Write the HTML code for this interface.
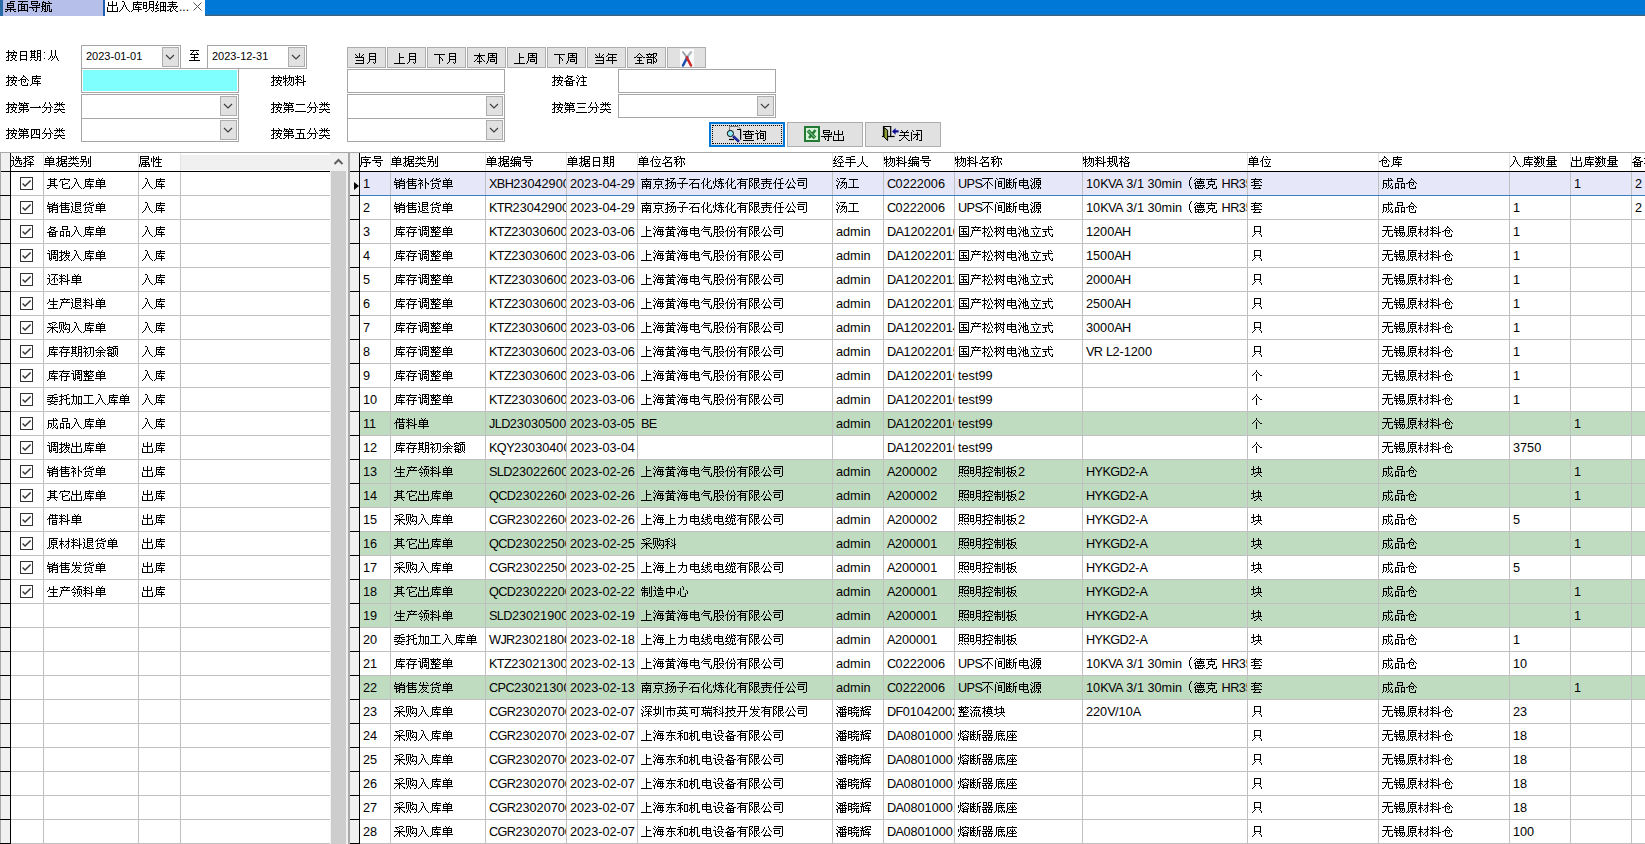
<!DOCTYPE html>
<html><head><meta charset="utf-8"><title>Inventory</title><style>
*{box-sizing:border-box;margin:0;padding:0}
html,body{width:1645px;height:844px;overflow:hidden;background:#fff}
body{position:relative;font-family:"Liberation Sans",sans-serif;font-size:12.7px;color:#000}
div,span{position:absolute;white-space:nowrap}
svg{display:block}
svg.g{display:inline-block;width:12px;height:13px;vertical-align:-2px;shape-rendering:crispEdges}
b{font-weight:normal}
.u{letter-spacing:-0.6px}
.cl{font-weight:normal;display:inline-block;width:6px;text-align:center}
.lb{height:24px;line-height:24px}
.box{background:#fff;border:1px solid #a6a6a6}
.dd{width:17px;height:20px;background:#e1e1e1;border:1px solid #adadad}
.dd svg{position:absolute;left:2px;top:5px}
.qb{top:47px;width:39px;height:21px;background:#e1e1e1;border:1px solid #adadad;text-align:center;line-height:23px;text-indent:-1px}
.ab{top:122px;width:76px;height:25px;background:#e1e1e1;border:1px solid #adadad}
.c{top:0;height:24px;line-height:25px;padding-left:3px;overflow:hidden}
.h{top:0;height:19px;line-height:19px;padding-left:0;overflow:hidden}
</style></head><body>
<svg style="position:absolute;width:0;height:0;left:0;top:0" width="0" height="0"><defs><path id="g0" d="M5 1h5v1h-5zM5 2h1v1h-1zM2 3h7v1h-7zM2 4h1v1h-1zM8 4h1v1h-1zM2 5h7v1h-7zM2 6h1v1h-1zM8 6h1v1h-1zM2 7h7v1h-7zM5 8h1v1h-1zM0 9h11v1h-11zM2 10h1v1h-1zM8 10h1v1h-1zM5 10h1v2h-1zM0 11h2v1h-2zM9 11h2v1h-2z"/><path id="g1" d="M1 1h10v1h-10zM5 2h1v1h-1zM4 3h1v1h-1zM1 4h10v1h-10zM4 5h1v1h-1zM7 5h1v1h-1zM4 6h4v1h-4zM4 7h1v1h-1zM7 7h1v1h-1zM4 8h4v1h-4zM1 5h1v5h-1zM10 5h1v5h-1zM4 9h1v1h-1zM7 9h1v1h-1zM1 10h10v1h-10zM1 11h1v1h-1zM10 11h1v1h-1z"/><path id="g2" d="M2 1h7v1h-7zM2 2h1v1h-1zM8 2h1v1h-1zM2 3h7v1h-7zM10 3h1v2h-1zM2 4h1v1h-1zM3 5h8v1h-8zM7 6h1v1h-1zM0 7h11v1h-11zM3 8h1v1h-1zM7 8h1v3h-1zM4 9h1v2h-1zM6 11h2v1h-2z"/><path id="g3" d="M2 1h1v1h-1zM7 1h1v1h-1zM1 2h4v1h-4zM8 2h1v1h-1zM1 3h1v1h-1zM4 3h7v1h-7zM1 4h2v1h-2zM4 4h1v1h-1zM1 5h1v1h-1zM3 5h2v1h-2zM6 5h3v1h-3zM0 6h5v1h-5zM1 7h1v1h-1zM4 7h1v2h-1zM1 8h2v1h-2zM3 9h2v1h-2zM6 6h1v5h-1zM8 6h1v5h-1zM1 9h1v2h-1zM10 9h1v2h-1zM4 10h1v1h-1zM0 11h1v1h-1zM3 11h3v1h-3zM8 11h3v1h-3z"/><path id="g4" d="M5 1h1v4h-1zM1 2h1v3h-1zM9 2h1v3h-1zM1 5h9v1h-9zM5 6h1v5h-1zM0 7h1v4h-1zM10 7h1v4h-1zM0 11h11v1h-11z"/><path id="g5" d="M3 1h2v1h-2zM5 2h1v3h-1zM4 5h1v2h-1zM6 5h1v2h-1zM3 7h1v2h-1zM7 7h1v2h-1zM2 9h1v1h-1zM8 9h1v1h-1zM1 10h1v1h-1zM9 10h1v1h-1zM0 11h1v1h-1zM10 11h1v1h-1z"/><path id="g6" d="M6 1h1v1h-1zM2 2h9v1h-9zM2 3h1v1h-1zM6 3h1v1h-1zM2 4h9v1h-9zM5 5h1v1h-1zM4 6h1v1h-1zM7 6h1v1h-1zM4 7h6v1h-6zM2 5h1v4h-1zM7 8h1v1h-1zM2 9h9v1h-9zM1 10h1v1h-1zM7 10h1v2h-1zM0 11h1v1h-1z"/><path id="g7" d="M6 1h5v1h-5zM0 2h4v1h-4zM6 2h1v2h-1zM10 2h1v2h-1zM0 3h1v2h-1zM3 3h1v2h-1zM6 4h5v1h-5zM0 5h4v1h-4zM6 5h1v2h-1zM10 5h1v2h-1zM0 6h1v2h-1zM3 6h1v2h-1zM6 7h5v1h-5zM0 8h4v1h-4zM6 8h1v1h-1zM5 9h1v1h-1zM10 8h1v3h-1zM4 10h1v1h-1zM8 10h1v1h-1zM2 11h2v1h-2zM9 11h1v1h-1z"/><path id="g8" d="M2 1h1v2h-1zM5 2h6v1h-6zM1 3h1v2h-1zM3 4h1v1h-1zM5 3h1v3h-1zM8 3h1v3h-1zM10 3h1v3h-1zM0 5h3v1h-3zM2 6h1v1h-1zM5 6h6v1h-6zM1 7h1v1h-1zM0 8h4v1h-4zM5 7h1v3h-1zM8 7h1v3h-1zM10 7h1v3h-1zM2 10h2v1h-2zM5 10h6v1h-6zM0 11h2v1h-2zM5 11h1v1h-1zM10 11h1v1h-1z"/><path id="g9" d="M5 1h1v1h-1zM1 2h9v1h-9zM5 3h1v1h-1zM2 4h7v1h-7zM5 5h1v1h-1zM0 6h11v1h-11zM4 7h1v1h-1zM9 7h1v1h-1zM6 7h1v2h-1zM3 8h1v1h-1zM8 8h1v1h-1zM2 9h2v1h-2zM7 9h1v1h-1zM0 10h2v1h-2zM3 10h1v1h-1zM5 10h1v1h-1zM8 10h1v1h-1zM3 11h2v1h-2zM9 11h2v1h-2z"/><path id="g10" d="M7 1h1v1h-1zM2 1h1v2h-1zM8 2h1v1h-1zM0 3h11v1h-11zM5 4h1v1h-1zM10 4h1v1h-1zM2 4h1v2h-1zM7 4h1v2h-1zM4 5h1v1h-1zM2 6h2v1h-2zM5 6h6v1h-6zM1 7h2v1h-2zM6 7h1v1h-1zM9 7h1v2h-1zM0 8h1v1h-1zM5 8h2v1h-2zM7 9h2v1h-2zM2 8h1v3h-1zM6 10h1v1h-1zM8 10h1v1h-1zM0 11h3v1h-3zM4 11h2v1h-2zM9 11h2v1h-2z"/><path id="g11" d="M2 2h7v1h-7zM2 3h1v3h-1zM8 3h1v3h-1zM2 6h7v1h-7zM2 7h1v3h-1zM8 7h1v3h-1zM2 10h7v1h-7zM2 11h1v1h-1zM8 11h1v1h-1z"/><path id="g12" d="M1 1h1v1h-1zM4 1h1v1h-1zM7 1h4v1h-4zM0 2h6v1h-6zM7 2h1v2h-1zM10 2h1v2h-1zM1 3h1v1h-1zM4 3h1v1h-1zM1 4h4v1h-4zM7 4h4v1h-4zM1 5h1v1h-1zM4 5h1v1h-1zM7 5h1v2h-1zM10 5h1v2h-1zM1 6h4v1h-4zM1 7h1v1h-1zM4 7h1v1h-1zM7 7h4v1h-4zM0 8h6v1h-6zM7 8h1v3h-1zM10 8h1v3h-1zM1 10h1v1h-1zM4 10h1v1h-1zM0 11h1v1h-1zM5 11h2v1h-2zM9 11h2v1h-2z"/><path id="g13" d="M3 1h1v6h-1zM7 1h1v6h-1zM2 7h1v2h-1zM4 7h1v2h-1zM6 7h1v2h-1zM8 7h1v2h-1zM1 9h1v1h-1zM5 9h1v1h-1zM9 9h1v2h-1zM0 10h1v1h-1zM4 10h1v1h-1zM3 11h1v1h-1zM10 11h1v1h-1z"/><path id="g14" d="M5 1h1v1h-1zM5 2h2v1h-2zM4 3h1v1h-1zM7 3h1v1h-1zM3 4h1v1h-1zM8 4h1v1h-1zM2 5h6v1h-6zM9 5h1v1h-1zM0 6h2v1h-2zM10 6h1v1h-1zM7 6h1v2h-1zM5 7h1v1h-1zM6 8h1v1h-1zM3 6h1v5h-1zM9 9h1v2h-1zM4 11h6v1h-6z"/><path id="g15" d="M1 1h1v1h-1zM6 1h1v1h-1zM1 2h4v1h-4zM6 2h5v1h-5zM1 3h1v1h-1zM3 3h1v1h-1zM5 3h1v1h-1zM8 3h1v1h-1zM0 4h1v1h-1zM2 4h8v1h-8zM5 5h1v1h-1zM9 5h1v1h-1zM1 6h9v1h-9zM1 7h1v1h-1zM5 7h1v1h-1zM1 8h10v1h-10zM3 9h1v1h-1zM10 9h1v1h-1zM2 10h1v1h-1zM8 10h2v1h-2zM5 9h1v3h-1zM0 11h2v1h-2z"/><path id="g16" d="M9 5h1v1h-1zM0 6h11v1h-11z"/><path id="g17" d="M3 1h1v2h-1zM7 1h1v2h-1zM2 3h1v2h-1zM8 3h1v2h-1zM1 5h1v1h-1zM9 5h1v1h-1zM0 6h1v1h-1zM2 6h7v1h-7zM10 6h1v1h-1zM4 7h1v2h-1zM3 9h1v1h-1zM8 7h1v4h-1zM2 10h1v1h-1zM0 11h2v1h-2zM6 11h2v1h-2z"/><path id="g18" d="M2 1h1v1h-1zM8 1h1v1h-1zM5 1h1v2h-1zM3 2h1v1h-1zM7 2h1v1h-1zM0 3h11v1h-11zM3 4h1v1h-1zM7 4h1v1h-1zM5 4h1v2h-1zM2 5h1v1h-1zM8 5h1v1h-1zM1 6h1v1h-1zM9 6h1v1h-1zM5 7h1v1h-1zM0 8h11v1h-11zM4 9h1v1h-1zM6 9h1v1h-1zM3 10h1v1h-1zM7 10h1v1h-1zM0 11h3v1h-3zM8 11h3v1h-3z"/><path id="g19" d="M1 2h9v1h-9zM4 3h1v4h-1zM6 3h1v4h-1zM9 3h1v4h-1zM1 3h1v5h-1zM3 7h1v1h-1zM6 7h4v1h-4zM1 8h2v1h-2zM9 8h1v2h-1zM1 9h1v1h-1zM1 10h9v1h-9zM1 11h1v1h-1zM9 11h1v1h-1z"/><path id="g20" d="M6 1h1v2h-1zM2 1h1v3h-1zM0 2h1v2h-1zM5 3h6v1h-6zM0 4h5v1h-5zM0 5h1v1h-1zM2 5h1v1h-1zM6 4h1v3h-1zM2 6h2v1h-2zM8 4h1v4h-1zM1 7h2v1h-2zM5 7h1v1h-1zM0 8h1v1h-1zM4 8h1v1h-1zM7 8h1v1h-1zM6 9h1v1h-1zM10 4h1v7h-1zM5 10h1v1h-1zM7 10h1v1h-1zM2 8h1v4h-1zM4 11h1v1h-1zM8 11h2v1h-2z"/><path id="g21" d="M2 1h1v2h-1zM0 2h1v1h-1zM4 2h2v1h-2zM1 3h3v1h-3zM6 3h1v1h-1zM2 4h1v1h-1zM0 5h6v1h-6zM8 1h1v6h-1zM2 6h1v1h-1zM6 6h1v1h-1zM2 7h2v1h-2zM8 7h3v1h-3zM1 8h2v1h-2zM4 8h5v1h-5zM0 9h1v1h-1zM2 9h1v3h-1zM8 9h1v3h-1z"/><path id="g22" d="M1 3h9v1h-9zM0 10h11v1h-11z"/><path id="g23" d="M1 2h9v1h-9zM5 3h1v3h-1zM2 6h7v1h-7zM4 7h1v4h-1zM8 7h1v4h-1zM0 11h11v1h-11z"/><path id="g24" d="M3 1h1v1h-1zM3 2h6v1h-6zM2 3h2v1h-2zM7 3h1v1h-1zM1 4h1v1h-1zM4 4h3v1h-3zM4 5h1v1h-1zM6 5h2v1h-2zM2 6h2v1h-2zM8 6h3v1h-3zM0 7h9v1h-9zM2 8h1v1h-1zM5 8h1v1h-1zM8 8h1v1h-1zM2 9h7v1h-7zM2 10h1v1h-1zM5 10h1v1h-1zM8 10h1v1h-1zM2 11h7v1h-7z"/><path id="g25" d="M1 1h1v1h-1zM6 1h1v1h-1zM2 2h1v1h-1zM7 2h1v1h-1zM0 3h1v1h-1zM4 3h7v1h-7zM1 4h1v1h-1zM3 4h1v2h-1zM7 4h1v3h-1zM2 6h1v2h-1zM5 7h5v1h-5zM0 8h2v1h-2zM7 8h1v3h-1zM1 9h1v3h-1zM4 11h7v1h-7z"/><path id="g26" d="M1 2h9v1h-9zM2 6h7v1h-7zM0 11h11v1h-11z"/><path id="g27" d="M1 1h9v1h-9zM4 2h1v1h-1zM3 3h1v1h-1zM7 3h1v1h-1zM2 4h1v1h-1zM8 4h1v1h-1zM1 5h9v1h-9zM5 6h1v2h-1zM2 8h7v1h-7zM5 9h1v2h-1zM0 11h11v1h-11z"/><path id="g28" d="M1 2h1v1h-1zM9 2h1v1h-1zM2 3h1v1h-1zM8 3h1v1h-1zM5 1h1v4h-1zM3 4h1v1h-1zM7 4h1v1h-1zM1 5h9v1h-9zM9 6h1v2h-1zM2 8h8v1h-8zM9 9h1v2h-1zM1 11h9v1h-9z"/><path id="g29" d="M3 1h7v1h-7zM3 2h1v2h-1zM9 2h1v2h-1zM3 4h7v1h-7zM3 5h1v2h-1zM9 5h1v2h-1zM3 7h7v1h-7zM3 8h1v2h-1zM9 8h1v3h-1zM2 10h1v1h-1zM7 10h1v1h-1zM1 11h1v1h-1zM8 11h1v1h-1z"/><path id="g30" d="M5 1h1v4h-1zM5 5h5v1h-5zM5 6h1v5h-1zM0 11h11v1h-11z"/><path id="g31" d="M0 2h11v1h-11zM5 3h1v2h-1zM5 5h2v1h-2zM7 6h1v1h-1zM8 7h1v2h-1zM5 6h1v6h-1z"/><path id="g32" d="M5 1h1v2h-1zM0 3h11v1h-11zM4 4h3v1h-3zM3 5h1v2h-1zM7 5h1v2h-1zM2 7h1v1h-1zM8 7h1v1h-1zM5 5h1v4h-1zM1 8h1v1h-1zM9 8h1v1h-1zM0 9h1v1h-1zM3 9h5v1h-5zM10 9h1v1h-1zM5 10h1v2h-1z"/><path id="g33" d="M2 1h9v1h-9zM6 2h1v1h-1zM4 3h5v1h-5zM2 2h1v3h-1zM10 2h1v3h-1zM6 4h1v1h-1zM2 5h9v1h-9zM4 7h5v1h-5zM2 6h1v3h-1zM4 8h1v1h-1zM8 8h1v1h-1zM4 9h5v1h-5zM10 6h1v5h-1zM1 9h1v2h-1zM0 11h1v1h-1zM9 11h2v1h-2z"/><path id="g34" d="M2 1h1v1h-1zM2 2h9v1h-9zM1 3h1v1h-1zM6 3h1v2h-1zM0 4h1v1h-1zM2 5h8v1h-8zM2 6h1v2h-1zM6 6h1v2h-1zM0 8h11v1h-11zM6 9h1v3h-1z"/><path id="g35" d="M5 1h1v1h-1zM4 2h1v1h-1zM6 2h1v1h-1zM3 3h1v1h-1zM7 3h1v1h-1zM2 4h1v1h-1zM8 4h1v1h-1zM0 5h2v1h-2zM3 5h5v1h-5zM9 5h2v1h-2zM5 6h1v2h-1zM3 8h5v1h-5zM5 9h1v2h-1zM1 11h9v1h-9z"/><path id="g36" d="M3 1h1v1h-1zM7 1h4v1h-4zM0 2h8v1h-8zM10 2h1v2h-1zM1 3h1v1h-1zM5 3h1v1h-1zM7 3h1v2h-1zM2 4h1v1h-1zM4 4h1v1h-1zM9 4h1v1h-1zM0 5h9v1h-9zM9 6h1v1h-1zM1 7h5v1h-5zM7 6h1v3h-1zM10 7h1v3h-1zM1 8h1v2h-1zM5 8h1v2h-1zM7 9h2v1h-2zM1 10h5v1h-5zM9 10h1v1h-1zM7 10h1v2h-1zM1 11h1v1h-1zM5 11h1v1h-1z"/><path id="g37" d="M5 1h1v1h-1zM0 2h11v1h-11zM3 3h1v1h-1zM7 3h1v1h-1zM5 3h1v2h-1zM2 4h1v1h-1zM8 4h1v1h-1zM0 5h11v1h-11zM2 6h1v1h-1zM8 6h1v1h-1zM2 7h7v1h-7zM2 8h1v1h-1zM8 8h1v1h-1zM2 9h7v1h-7zM0 11h11v1h-11z"/><path id="g38" d="M1 1h1v1h-1zM5 1h1v1h-1zM2 2h1v1h-1zM5 2h6v1h-6zM4 3h1v1h-1zM0 4h4v1h-4zM5 4h4v1h-4zM5 5h1v1h-1zM8 5h1v1h-1zM5 6h4v1h-4zM2 5h1v4h-1zM5 7h1v2h-1zM8 7h1v2h-1zM2 9h2v1h-2zM5 9h4v1h-4zM10 3h1v8h-1zM2 10h1v1h-1zM8 11h2v1h-2z"/><path id="g39" d="M2 1h1v1h-1zM8 1h1v1h-1zM3 2h1v1h-1zM7 2h1v1h-1zM1 3h9v1h-9zM5 4h1v2h-1zM0 6h10v1h-10zM5 7h1v1h-1zM4 8h1v1h-1zM6 8h1v1h-1zM3 9h1v1h-1zM7 9h1v1h-1zM2 10h1v1h-1zM8 10h1v1h-1zM0 11h2v1h-2zM9 11h2v1h-2z"/><path id="g40" d="M1 1h1v1h-1zM5 1h6v1h-6zM2 2h1v1h-1zM6 3h1v2h-1zM2 5h7v1h-7zM5 6h2v1h-2zM4 7h1v1h-1zM3 8h1v1h-1zM6 7h1v3h-1zM2 9h1v1h-1zM10 2h1v9h-1zM5 10h2v1h-2zM0 3h1v9h-1zM8 11h3v1h-3z"/><path id="g41" d="M1 1h1v1h-1zM5 1h1v2h-1zM7 1h1v2h-1zM2 2h1v2h-1zM5 3h5v1h-5zM4 4h1v1h-1zM7 4h1v1h-1zM0 5h3v1h-3zM4 5h7v1h-7zM6 6h1v2h-1zM8 6h1v3h-1zM10 7h1v2h-1zM5 8h1v1h-1zM2 6h1v4h-1zM4 9h1v1h-1zM9 9h2v1h-2zM1 10h1v1h-1zM3 10h1v1h-1zM0 11h1v1h-1zM4 11h7v1h-7z"/><path id="g42" d="M4 1h7v1h-7zM2 1h1v2h-1zM6 2h1v1h-1zM9 2h1v1h-1zM0 3h5v1h-5zM7 3h2v1h-2zM6 4h1v1h-1zM9 4h1v1h-1zM2 4h1v2h-1zM4 5h2v1h-2zM10 5h1v1h-1zM2 6h2v1h-2zM7 6h1v1h-1zM1 7h2v1h-2zM5 7h5v1h-5zM0 8h1v1h-1zM7 8h1v1h-1zM4 9h7v1h-7zM2 8h1v3h-1zM7 10h1v2h-1zM0 11h3v1h-3z"/><path id="g43" d="M3 1h1v1h-1zM7 1h1v1h-1zM4 2h1v1h-1zM6 2h1v1h-1zM1 3h9v1h-9zM1 4h1v1h-1zM5 4h1v1h-1zM9 4h1v1h-1zM1 5h9v1h-9zM1 6h1v1h-1zM5 6h1v1h-1zM9 6h1v1h-1zM1 7h9v1h-9zM5 8h1v1h-1zM0 9h11v1h-11zM5 10h1v2h-1z"/><path id="g44" d="M5 1h6v1h-6zM2 1h1v2h-1zM5 2h1v1h-1zM10 2h1v2h-1zM0 3h6v1h-6zM5 4h6v1h-6zM2 4h1v2h-1zM4 5h2v1h-2zM8 5h1v1h-1zM2 6h2v1h-2zM5 6h6v1h-6zM1 7h2v1h-2zM5 7h1v1h-1zM8 7h1v1h-1zM0 8h1v1h-1zM5 8h6v1h-6zM4 9h3v1h-3zM2 8h1v3h-1zM10 9h1v2h-1zM0 10h1v1h-1zM4 10h1v1h-1zM6 10h1v1h-1zM1 11h1v1h-1zM3 11h1v1h-1zM6 11h5v1h-5z"/><path id="g45" d="M1 1h5v1h-5zM1 2h1v2h-1zM5 2h1v2h-1zM1 4h5v1h-5zM3 5h1v1h-1zM0 6h7v1h-7zM3 7h1v1h-1zM8 3h1v6h-1zM2 8h1v2h-1zM10 1h1v10h-1zM6 7h1v4h-1zM1 10h1v1h-1zM0 11h1v1h-1zM4 11h2v1h-2zM8 11h3v1h-3z"/><path id="g46" d="M1 1h9v1h-9zM1 2h1v1h-1zM9 2h1v1h-1zM1 3h9v1h-9zM9 4h1v1h-1zM3 5h6v1h-6zM6 6h1v1h-1zM3 7h7v1h-7zM1 4h1v5h-1zM3 8h1v1h-1zM6 8h1v1h-1zM9 8h1v1h-1zM2 9h9v1h-9zM6 10h1v1h-1zM10 10h1v1h-1zM0 9h1v3h-1zM2 10h1v2h-1zM4 11h4v1h-4zM9 11h2v1h-2z"/><path id="g47" d="M2 1h1v2h-1zM7 1h1v3h-1zM5 2h1v2h-1zM2 3h2v1h-2zM4 4h7v1h-7zM2 4h1v2h-1zM4 5h1v1h-1zM0 3h1v4h-1zM7 5h1v2h-1zM2 6h2v1h-2zM5 7h5v1h-5zM7 8h1v3h-1zM2 7h1v5h-1zM4 11h7v1h-7z"/><path id="g48" d="M3 1h1v1h-1zM7 1h1v1h-1zM1 2h9v1h-9zM3 3h1v1h-1zM7 3h1v1h-1zM3 4h5v1h-5zM3 5h1v1h-1zM7 5h1v1h-1zM3 6h5v1h-5zM3 7h1v1h-1zM7 7h1v1h-1zM0 8h11v1h-11zM3 9h1v1h-1zM7 9h1v1h-1zM2 10h1v1h-1zM8 10h1v1h-1zM0 11h2v1h-2zM9 11h1v1h-1z"/><path id="g49" d="M5 1h1v1h-1zM1 2h10v1h-10zM1 3h1v1h-1zM10 3h1v1h-1zM0 4h1v1h-1zM9 4h1v1h-1zM3 4h1v3h-1zM6 6h3v1h-3zM3 7h3v1h-3zM3 8h1v3h-1zM10 9h1v2h-1zM4 11h7v1h-7z"/><path id="g50" d="M1 1h1v2h-1zM7 1h1v2h-1zM5 2h1v1h-1zM10 2h1v1h-1zM1 3h4v1h-4zM6 3h2v1h-2zM9 3h1v1h-1zM0 4h1v1h-1zM5 4h6v1h-6zM0 5h6v1h-6zM10 5h1v1h-1zM2 6h1v1h-1zM5 6h6v1h-6zM0 7h6v1h-6zM10 7h1v1h-1zM5 8h6v1h-6zM2 8h1v2h-1zM4 9h2v1h-2zM10 9h1v2h-1zM2 10h2v1h-2zM5 10h1v2h-1zM2 11h1v1h-1zM8 11h3v1h-3z"/><path id="g51" d="M2 1h1v1h-1zM6 1h1v1h-1zM2 2h9v1h-9zM2 3h1v1h-1zM6 3h1v1h-1zM1 4h9v1h-9zM0 5h1v1h-1zM2 5h1v1h-1zM6 5h1v1h-1zM2 6h8v1h-8zM2 7h1v1h-1zM6 7h1v1h-1zM2 8h9v1h-9zM2 9h1v2h-1zM9 9h1v2h-1zM2 11h8v1h-8z"/><path id="g52" d="M0 1h1v1h-1zM4 1h6v1h-6zM4 2h1v1h-1zM9 2h1v1h-1zM1 2h1v2h-1zM4 3h6v1h-6zM4 4h1v1h-1zM9 4h1v1h-1zM0 5h2v1h-2zM4 5h6v1h-6zM6 7h2v1h-2zM9 7h1v1h-1zM4 6h1v3h-1zM8 8h1v1h-1zM1 6h1v4h-1zM4 9h3v1h-3zM9 9h1v1h-1zM2 10h2v1h-2zM0 10h1v2h-1zM4 11h7v1h-7z"/><path id="g53" d="M3 1h1v1h-1zM6 1h1v1h-1zM9 1h1v1h-1zM2 2h1v1h-1zM6 2h3v1h-3zM1 3h2v1h-2zM4 3h3v1h-3zM10 3h1v1h-1zM0 4h1v1h-1zM2 4h1v1h-1zM7 4h4v1h-4zM2 6h7v1h-7zM2 7h1v3h-1zM8 7h1v3h-1zM5 8h1v2h-1zM4 10h1v1h-1zM6 10h1v1h-1zM1 11h3v1h-3zM7 11h3v1h-3z"/><path id="g54" d="M3 1h6v1h-6zM3 2h1v2h-1zM8 2h1v2h-1zM3 4h6v1h-6zM1 6h4v1h-4zM7 6h4v1h-4zM1 7h1v3h-1zM4 7h1v3h-1zM7 7h1v3h-1zM10 7h1v3h-1zM1 10h4v1h-4zM7 10h4v1h-4zM1 11h1v1h-1zM4 11h1v1h-1zM7 11h1v1h-1zM10 11h1v1h-1z"/><path id="g55" d="M1 1h1v1h-1zM4 1h7v1h-7zM2 2h1v1h-1zM7 2h1v1h-1zM6 3h3v1h-3zM4 2h1v3h-1zM10 2h1v3h-1zM0 4h3v1h-3zM7 4h1v1h-1zM4 5h7v1h-7zM6 7h3v1h-3zM2 5h1v4h-1zM4 6h1v3h-1zM6 8h1v1h-1zM8 8h1v1h-1zM2 9h3v1h-3zM6 9h3v1h-3zM10 6h1v5h-1zM2 10h1v1h-1zM4 10h1v1h-1zM3 11h1v1h-1zM8 11h3v1h-3z"/><path id="g56" d="M2 1h1v2h-1zM5 2h1v1h-1zM9 2h1v1h-1zM7 1h1v3h-1zM0 3h6v1h-6zM10 3h1v1h-1zM5 4h6v1h-6zM2 4h1v2h-1zM4 5h1v1h-1zM7 5h1v1h-1zM2 6h2v1h-2zM6 6h5v1h-5zM1 7h2v1h-2zM6 7h1v1h-1zM9 7h1v2h-1zM0 8h1v1h-1zM5 8h1v1h-1zM7 8h1v1h-1zM2 8h1v2h-1zM4 9h1v1h-1zM8 9h1v1h-1zM2 10h2v1h-2zM7 10h1v1h-1zM9 10h1v1h-1zM0 11h3v1h-3zM5 11h2v1h-2zM10 11h1v1h-1z"/><path id="g57" d="M1 1h1v1h-1zM4 1h7v1h-7zM8 2h1v1h-1zM2 2h1v2h-1zM7 3h1v2h-1zM0 5h3v1h-3zM6 5h2v1h-2zM9 5h1v1h-1zM5 6h1v1h-1zM10 6h1v2h-1zM4 7h1v1h-1zM2 6h1v4h-1zM7 6h1v4h-1zM1 10h1v1h-1zM3 10h1v1h-1zM0 11h1v1h-1zM4 11h7v1h-7z"/><path id="g58" d="M6 1h1v3h-1zM2 2h1v2h-1zM2 4h9v1h-9zM1 5h1v1h-1zM6 5h1v2h-1zM0 6h1v1h-1zM3 7h7v1h-7zM6 8h1v3h-1zM1 11h10v1h-10z"/><path id="g59" d="M5 1h1v1h-1zM1 2h10v1h-10zM3 3h1v1h-1zM8 3h1v1h-1zM4 4h1v1h-1zM7 4h1v1h-1zM2 5h9v1h-9zM2 6h1v3h-1zM1 9h1v2h-1zM0 11h1v1h-1z"/><path id="g60" d="M5 1h4v1h-4zM1 2h4v1h-4zM9 2h1v1h-1zM2 3h1v1h-1zM5 3h1v1h-1zM8 3h1v1h-1zM3 4h1v1h-1zM7 4h1v1h-1zM5 5h1v1h-1zM0 6h11v1h-11zM4 7h3v1h-3zM3 8h1v1h-1zM7 8h1v1h-1zM2 9h1v1h-1zM8 9h1v1h-1zM1 10h1v1h-1zM9 10h2v1h-2zM5 8h1v4h-1zM0 11h1v1h-1zM10 11h1v1h-1z"/><path id="g61" d="M0 1h5v1h-5zM6 1h1v2h-1zM4 2h1v2h-1zM6 3h5v1h-5zM4 4h2v1h-2zM7 5h1v1h-1zM0 2h1v6h-1zM10 4h1v4h-1zM4 5h1v3h-1zM6 6h1v2h-1zM8 7h1v1h-1zM2 3h1v6h-1zM5 8h3v1h-3zM9 8h2v1h-2zM3 9h1v1h-1zM1 9h1v2h-1zM10 9h1v2h-1zM4 10h1v2h-1zM0 11h1v1h-1zM8 11h2v1h-2z"/><path id="g62" d="M4 1h1v1h-1zM0 2h11v1h-11zM3 3h1v1h-1zM4 4h6v1h-6zM2 4h1v2h-1zM8 5h1v1h-1zM1 6h2v1h-2zM7 6h1v1h-1zM0 7h1v1h-1zM2 7h9v1h-9zM7 8h1v3h-1zM2 8h1v4h-1zM5 11h3v1h-3z"/><path id="g63" d="M1 1h1v1h-1zM2 2h1v1h-1zM5 2h6v1h-6zM0 3h5v1h-5zM3 4h1v1h-1zM2 5h1v1h-1zM1 6h2v1h-2zM4 6h1v1h-1zM0 7h1v1h-1zM2 7h2v1h-2zM7 3h1v6h-1zM4 8h1v1h-1zM6 9h1v1h-1zM10 3h1v8h-1zM5 10h1v1h-1zM2 8h1v4h-1zM4 11h1v1h-1zM8 11h2v1h-2z"/><path id="g64" d="M5 1h1v1h-1zM4 2h1v1h-1zM6 2h1v1h-1zM3 3h1v1h-1zM7 3h1v1h-1zM2 4h1v1h-1zM8 4h1v1h-1zM0 5h2v1h-2zM3 5h5v1h-5zM9 5h2v1h-2zM5 6h1v1h-1zM1 7h9v1h-9zM3 9h1v1h-1zM7 9h1v1h-1zM5 8h1v3h-1zM2 10h1v1h-1zM8 10h1v1h-1zM1 11h1v1h-1zM4 11h2v1h-2zM9 11h1v1h-1z"/><path id="g65" d="M2 1h1v1h-1zM6 1h5v1h-5zM0 2h6v1h-6zM8 2h1v1h-1zM0 3h1v1h-1zM5 3h6v1h-6zM1 4h4v1h-4zM0 5h2v1h-2zM4 5h1v1h-1zM2 6h2v1h-2zM6 4h1v4h-1zM1 7h1v1h-1zM4 7h1v1h-1zM0 8h7v1h-7zM10 4h1v6h-1zM8 5h1v5h-1zM1 9h1v1h-1zM4 9h1v1h-1zM6 9h1v1h-1zM1 10h4v1h-4zM7 10h1v1h-1zM9 10h1v1h-1zM1 11h1v1h-1zM4 11h3v1h-3zM10 11h1v1h-1z"/><path id="g66" d="M3 1h1v1h-1zM7 1h1v1h-1zM0 2h11v1h-11zM1 3h1v1h-1zM3 3h1v1h-1zM5 3h1v1h-1zM7 3h1v1h-1zM9 3h1v1h-1zM1 4h5v1h-5zM8 4h1v1h-1zM2 5h3v1h-3zM7 5h1v1h-1zM9 5h1v1h-1zM1 6h1v1h-1zM3 6h1v1h-1zM5 6h2v1h-2zM10 6h1v1h-1zM1 7h9v1h-9zM5 8h1v1h-1zM5 9h4v1h-4zM2 9h1v2h-1zM5 10h1v1h-1zM0 11h11v1h-11z"/><path id="g67" d="M7 1h3v1h-3zM1 2h6v1h-6zM5 3h1v1h-1zM0 4h11v1h-11zM3 5h1v1h-1zM7 5h1v1h-1zM5 5h1v2h-1zM0 6h3v1h-3zM8 6h3v1h-3zM4 7h1v1h-1zM0 8h11v1h-11zM3 9h1v1h-1zM7 9h1v1h-1zM4 10h3v1h-3zM1 11h3v1h-3zM7 11h3v1h-3z"/><path id="g68" d="M8 1h2v1h-2zM2 1h1v2h-1zM5 2h3v1h-3zM0 3h5v1h-5zM7 3h1v2h-1zM2 4h1v2h-1zM4 5h1v1h-1zM7 5h4v1h-4zM2 6h2v1h-2zM5 6h3v1h-3zM1 7h2v1h-2zM0 8h1v1h-1zM7 7h1v4h-1zM2 8h1v3h-1zM10 9h1v2h-1zM0 11h3v1h-3zM8 11h3v1h-3z"/><path id="g69" d="M2 1h1v2h-1zM0 3h6v1h-6zM7 3h4v1h-4zM2 4h1v5h-1zM7 4h1v6h-1zM10 4h1v6h-1zM5 4h1v7h-1zM1 9h1v2h-1zM3 10h1v1h-1zM7 10h4v1h-4zM0 11h1v1h-1zM4 11h1v1h-1zM7 11h1v1h-1zM10 11h1v1h-1z"/><path id="g70" d="M1 2h9v1h-9zM5 3h1v7h-1zM0 10h11v1h-11z"/><path id="g71" d="M8 1h1v1h-1zM6 1h1v2h-1zM9 2h1v1h-1zM1 3h10v1h-10zM1 4h1v2h-1zM1 6h4v1h-4zM9 6h1v2h-1zM6 4h1v5h-1zM8 8h1v1h-1zM4 7h1v3h-1zM7 9h1v1h-1zM1 7h1v4h-1zM10 9h1v2h-1zM3 10h1v1h-1zM6 10h1v1h-1zM8 10h1v1h-1zM0 11h1v1h-1zM5 11h1v1h-1zM9 11h2v1h-2z"/><path id="g72" d="M1 1h1v1h-1zM2 2h1v1h-1zM0 3h5v1h-5zM7 1h1v4h-1zM3 4h1v1h-1zM2 5h1v1h-1zM4 5h1v1h-1zM7 5h2v1h-2zM1 6h3v1h-3zM9 6h2v1h-2zM0 7h1v1h-1zM10 7h1v1h-1zM4 7h1v2h-1zM7 6h1v6h-1zM2 7h1v5h-1z"/><path id="g73" d="M3 1h1v1h-1zM5 1h1v1h-1zM8 1h1v1h-1zM3 2h8v1h-8zM2 3h1v2h-1zM5 3h1v2h-1zM8 3h1v2h-1zM1 5h10v1h-10zM0 6h1v1h-1zM5 7h5v1h-5zM5 8h1v1h-1zM9 8h1v1h-1zM5 9h5v1h-5zM5 10h1v1h-1zM9 10h1v1h-1zM2 6h1v6h-1zM5 11h5v1h-5z"/><path id="g74" d="M2 1h9v1h-9zM6 2h1v1h-1zM4 3h6v1h-6zM4 4h1v1h-1zM9 4h1v1h-1zM4 5h6v1h-6zM4 6h1v1h-1zM9 6h1v1h-1zM4 7h6v1h-6zM2 2h1v8h-1zM4 9h1v1h-1zM8 9h1v1h-1zM6 8h1v3h-1zM1 10h1v1h-1zM3 10h1v1h-1zM9 10h2v1h-2zM0 11h1v1h-1zM2 11h1v1h-1zM5 11h2v1h-2zM10 11h1v1h-1z"/><path id="g75" d="M2 1h1v3h-1zM9 1h1v3h-1zM0 4h5v1h-5zM6 4h5v1h-5zM2 5h1v1h-1zM9 5h1v1h-1zM1 6h3v1h-3zM8 6h2v1h-2zM1 7h2v1h-2zM4 7h1v1h-1zM7 7h1v1h-1zM0 8h1v1h-1zM6 8h1v1h-1zM5 9h1v1h-1zM9 7h1v4h-1zM7 10h1v1h-1zM2 8h1v4h-1zM8 11h1v1h-1z"/><path id="g76" d="M8 1h1v1h-1zM2 1h1v2h-1zM9 2h1v1h-1zM5 1h1v3h-1zM1 3h1v1h-1zM1 4h10v1h-10zM4 5h1v1h-1zM4 6h5v1h-5zM4 7h1v1h-1zM8 7h1v1h-1zM3 8h1v1h-1zM5 8h1v1h-1zM7 8h1v1h-1zM2 9h1v1h-1zM6 9h1v1h-1zM1 10h1v1h-1zM5 10h1v1h-1zM7 10h2v1h-2zM0 11h1v1h-1zM3 11h2v1h-2zM9 11h2v1h-2z"/><path id="g77" d="M6 1h5v1h-5zM3 1h1v2h-1zM8 2h1v1h-1zM2 3h1v1h-1zM4 3h1v1h-1zM7 3h1v1h-1zM1 4h2v1h-2zM5 4h6v1h-6zM0 5h1v1h-1zM3 5h1v1h-1zM1 7h4v1h-4zM6 5h1v4h-1zM10 5h1v4h-1zM4 8h1v1h-1zM8 6h1v4h-1zM3 9h1v1h-1zM2 10h1v1h-1zM7 10h1v1h-1zM9 10h1v1h-1zM3 11h1v1h-1zM6 11h1v1h-1zM10 11h1v1h-1z"/><path id="g78" d="M5 1h1v1h-1zM1 2h10v1h-10zM3 4h6v1h-6zM5 5h1v1h-1zM7 5h1v1h-1zM1 3h1v4h-1zM6 6h1v1h-1zM1 7h10v1h-10zM9 8h1v1h-1zM1 8h1v2h-1zM6 8h1v3h-1zM0 10h1v2h-1zM4 11h3v1h-3z"/><path id="g79" d="M2 1h7v1h-7zM2 2h1v1h-1zM8 2h1v1h-1zM2 3h7v1h-7zM0 5h11v1h-11zM4 6h1v1h-1zM3 7h6v1h-6zM8 8h1v3h-1zM5 10h1v1h-1zM6 11h2v1h-2z"/><path id="g80" d="M7 1h1v1h-1zM2 1h1v2h-1zM4 2h7v1h-7zM4 3h1v1h-1zM10 3h1v1h-1zM1 3h1v2h-1zM3 4h8v1h-8zM0 5h3v1h-3zM4 5h1v1h-1zM2 6h1v1h-1zM4 6h7v1h-7zM1 7h1v1h-1zM4 7h1v1h-1zM6 7h1v1h-1zM8 7h1v1h-1zM10 7h1v1h-1zM0 8h11v1h-11zM4 9h1v1h-1zM6 9h1v2h-1zM8 9h1v2h-1zM10 9h1v2h-1zM2 10h3v1h-3zM0 11h2v1h-2zM4 11h1v1h-1zM9 11h2v1h-2z"/><path id="g81" d="M6 1h1v1h-1zM3 1h1v2h-1zM7 2h1v1h-1zM2 3h1v2h-1zM4 4h7v1h-7zM1 5h2v1h-2zM0 6h1v1h-1zM5 6h1v1h-1zM9 6h1v2h-1zM6 7h1v2h-1zM8 8h1v2h-1zM7 10h1v1h-1zM2 6h1v6h-1zM4 11h7v1h-7z"/><path id="g82" d="M3 1h1v1h-1zM3 2h7v1h-7zM3 3h1v1h-1zM8 3h1v1h-1zM2 4h1v1h-1zM4 4h1v1h-1zM7 4h1v1h-1zM1 5h1v1h-1zM5 5h2v1h-2zM5 6h1v1h-1zM3 7h7v1h-7zM0 8h4v1h-4zM9 8h1v3h-1zM3 9h1v2h-1zM3 11h7v1h-7z"/><path id="g83" d="M3 1h2v1h-2zM6 1h1v2h-1zM0 2h3v1h-3zM2 3h1v1h-1zM5 3h6v1h-6zM0 4h5v1h-5zM10 4h1v1h-1zM2 5h1v1h-1zM1 6h3v1h-3zM5 6h1v2h-1zM9 6h1v2h-1zM1 7h2v1h-2zM0 8h1v1h-1zM2 8h1v1h-1zM4 8h1v1h-1zM10 8h1v2h-1zM2 9h2v1h-2zM7 4h1v7h-1zM2 10h1v2h-1zM6 11h2v1h-2z"/><path id="g84" d="M5 1h5v1h-5zM2 1h1v2h-1zM8 2h1v1h-1zM4 3h1v1h-1zM7 3h1v1h-1zM1 3h1v2h-1zM3 4h1v1h-1zM6 4h1v1h-1zM8 4h1v1h-1zM0 5h3v1h-3zM5 5h1v1h-1zM9 5h1v1h-1zM2 6h1v1h-1zM4 6h1v1h-1zM10 6h1v1h-1zM1 7h1v1h-1zM5 7h5v1h-5zM0 8h4v1h-4zM7 8h1v3h-1zM2 10h2v1h-2zM0 11h2v1h-2zM4 11h7v1h-7z"/><path id="g85" d="M6 1h4v1h-4zM1 2h5v1h-5zM5 3h1v1h-1zM1 4h9v1h-9zM5 5h1v2h-1zM0 7h11v1h-11zM5 8h1v3h-1zM4 11h2v1h-2z"/><path id="g86" d="M5 1h1v6h-1zM4 7h1v2h-1zM6 7h1v2h-1zM3 9h1v1h-1zM7 9h1v1h-1zM2 10h1v1h-1zM8 10h1v1h-1zM0 11h2v1h-2zM9 11h2v1h-2z"/><path id="g87" d="M5 1h5v1h-5zM2 1h1v2h-1zM5 2h1v1h-1zM0 3h6v1h-6zM2 4h1v2h-1zM5 4h1v2h-1zM0 6h6v1h-6zM9 2h1v6h-1zM7 3h1v5h-1zM2 7h1v1h-1zM5 7h1v1h-1zM2 8h2v1h-2zM7 8h2v1h-2zM2 9h1v1h-1zM4 9h1v1h-1zM6 9h1v1h-1zM8 9h1v2h-1zM10 9h1v2h-1zM1 10h1v1h-1zM5 10h1v1h-1zM0 11h1v1h-1zM3 11h2v1h-2zM9 11h2v1h-2z"/><path id="g88" d="M6 1h1v1h-1zM2 1h1v2h-1zM6 2h4v1h-4zM0 3h4v1h-4zM5 3h1v1h-1zM9 3h1v1h-1zM4 4h1v1h-1zM6 4h1v1h-1zM8 4h1v1h-1zM2 4h1v2h-1zM7 5h1v1h-1zM1 6h3v1h-3zM6 6h1v1h-1zM8 6h1v1h-1zM1 7h2v1h-2zM4 7h2v1h-2zM9 7h2v1h-2zM0 8h1v1h-1zM5 8h5v1h-5zM5 9h1v2h-1zM9 9h1v2h-1zM2 8h1v4h-1zM5 11h5v1h-5z"/><path id="g89" d="M0 1h1v1h-1zM3 1h1v1h-1zM5 1h1v1h-1zM7 1h1v2h-1zM1 2h1v1h-1zM3 2h2v1h-2zM0 3h6v1h-6zM7 3h4v1h-4zM2 4h2v1h-2zM6 4h2v1h-2zM1 5h1v1h-1zM3 5h2v1h-2zM0 6h1v1h-1zM3 6h1v1h-1zM5 6h1v1h-1zM0 7h6v1h-6zM9 4h1v5h-1zM7 5h1v4h-1zM2 8h1v1h-1zM4 8h1v2h-1zM1 9h2v1h-2zM8 9h1v1h-1zM3 10h1v1h-1zM7 10h1v1h-1zM9 10h1v1h-1zM0 11h3v1h-3zM4 11h3v1h-3zM10 11h1v1h-1z"/><path id="g90" d="M2 1h7v1h-7zM2 2h1v1h-1zM8 2h1v1h-1zM2 3h7v1h-7zM2 4h1v1h-1zM8 4h1v1h-1zM0 5h11v1h-11zM2 6h1v1h-1zM5 6h1v1h-1zM8 6h1v1h-1zM2 7h7v1h-7zM2 8h1v1h-1zM5 8h1v1h-1zM8 8h1v1h-1zM1 9h9v1h-9zM5 10h1v1h-1zM0 11h11v1h-11z"/><path id="g91" d="M5 1h1v1h-1zM0 2h11v1h-11zM5 3h1v1h-1zM1 4h9v1h-9zM3 5h1v1h-1zM7 5h1v1h-1zM1 5h1v2h-1zM9 5h1v2h-1zM4 6h1v1h-1zM6 6h1v1h-1zM1 7h9v1h-9zM1 8h1v1h-1zM5 8h1v1h-1zM9 8h1v1h-1zM1 9h9v1h-9zM9 10h1v1h-1zM1 10h1v2h-1zM5 10h1v2h-1zM8 11h2v1h-2z"/><path id="g92" d="M5 1h1v1h-1zM0 2h11v1h-11zM2 4h7v1h-7zM2 5h1v2h-1zM8 5h1v2h-1zM2 7h7v1h-7zM2 9h1v1h-1zM8 9h1v1h-1zM5 8h1v3h-1zM1 10h1v1h-1zM9 10h1v1h-1zM0 11h1v1h-1zM4 11h2v1h-2zM10 11h1v1h-1z"/><path id="g93" d="M5 1h5v1h-5zM2 1h1v2h-1zM8 2h1v1h-1zM0 3h5v1h-5zM7 3h1v1h-1zM6 4h1v1h-1zM2 4h1v2h-1zM4 5h7v1h-7zM2 6h2v1h-2zM6 6h1v2h-1zM8 6h1v2h-1zM1 7h2v1h-2zM0 8h1v1h-1zM5 8h1v1h-1zM7 8h1v2h-1zM4 9h1v1h-1zM10 6h1v5h-1zM2 8h1v3h-1zM6 10h1v1h-1zM0 11h3v1h-3zM5 11h1v1h-1zM8 11h2v1h-2z"/><path id="g94" d="M2 1h7v1h-7zM7 2h1v1h-1zM6 3h1v1h-1zM5 4h1v2h-1zM0 6h11v1h-11zM5 7h1v4h-1zM3 10h1v1h-1zM4 11h1v1h-1z"/><path id="g95" d="M0 2h11v1h-11zM5 3h1v1h-1zM4 4h1v1h-1zM3 5h1v1h-1zM2 6h8v1h-8zM1 7h1v1h-1zM0 8h1v1h-1zM3 7h1v3h-1zM9 7h1v3h-1zM3 10h7v1h-7zM3 11h1v1h-1zM9 11h1v1h-1z"/><path id="g96" d="M3 1h1v2h-1zM9 3h1v1h-1zM6 1h1v4h-1zM2 3h1v2h-1zM8 4h1v1h-1zM1 5h2v1h-2zM6 5h2v1h-2zM0 6h1v1h-1zM6 6h1v1h-1zM5 7h2v1h-2zM4 8h1v1h-1zM6 8h1v3h-1zM10 9h1v2h-1zM2 6h1v6h-1zM7 11h4v1h-4z"/><path id="g97" d="M7 1h1v1h-1zM5 2h6v1h-6zM2 1h1v3h-1zM4 3h1v1h-1zM7 3h1v1h-1zM2 4h2v1h-2zM5 4h4v1h-4zM6 5h1v1h-1zM8 5h1v1h-1zM0 4h1v3h-1zM5 6h6v1h-6zM2 5h1v3h-1zM8 7h1v1h-1zM2 8h2v1h-2zM6 8h1v1h-1zM8 8h2v1h-2zM4 9h2v1h-2zM1 9h1v2h-1zM8 9h1v2h-1zM10 9h1v2h-1zM5 10h1v1h-1zM0 11h1v1h-1zM7 11h2v1h-2z"/><path id="g98" d="M4 1h1v1h-1zM0 2h11v1h-11zM3 3h1v1h-1zM3 4h6v1h-6zM2 5h2v1h-2zM8 5h1v1h-1zM1 6h1v1h-1zM3 6h6v1h-6zM0 7h1v1h-1zM3 7h1v1h-1zM8 7h1v1h-1zM3 8h6v1h-6zM8 9h1v2h-1zM3 9h1v3h-1zM7 11h2v1h-2z"/><path id="g99" d="M0 1h4v1h-4zM5 1h5v1h-5zM3 2h1v1h-1zM5 2h1v1h-1zM9 2h1v1h-1zM0 2h1v2h-1zM2 3h1v1h-1zM5 3h5v1h-5zM0 4h2v1h-2zM5 4h1v1h-1zM9 4h1v1h-1zM2 5h1v1h-1zM5 5h5v1h-5zM0 5h1v3h-1zM10 7h1v1h-1zM3 6h1v3h-1zM7 6h1v3h-1zM0 8h2v1h-2zM9 8h1v1h-1zM2 9h1v1h-1zM8 9h1v1h-1zM5 6h1v5h-1zM7 10h1v1h-1zM9 10h1v1h-1zM0 9h1v3h-1zM5 11h2v1h-2zM10 11h1v1h-1z"/><path id="g100" d="M5 1h1v1h-1zM0 2h11v1h-11zM5 3h1v1h-1zM1 4h9v1h-9zM5 5h1v1h-1zM0 6h11v1h-11zM2 7h1v3h-1zM8 7h1v3h-1zM5 8h1v2h-1zM4 10h1v1h-1zM7 10h1v1h-1zM0 11h4v1h-4zM8 11h3v1h-3z"/><path id="g101" d="M8 1h2v1h-2zM3 1h1v2h-1zM5 2h3v1h-3zM2 3h1v2h-1zM7 3h1v3h-1zM1 5h2v1h-2zM0 6h1v1h-1zM4 6h7v1h-7zM7 7h1v4h-1zM2 6h1v6h-1zM5 11h5v1h-5z"/><path id="g102" d="M7 1h1v2h-1zM3 2h1v2h-1zM8 3h1v2h-1zM2 4h1v2h-1zM9 5h1v1h-1zM5 5h1v2h-1zM1 6h1v1h-1zM10 6h1v1h-1zM0 7h1v1h-1zM4 7h1v2h-1zM7 8h1v1h-1zM3 9h1v1h-1zM8 9h1v1h-1zM2 10h8v1h-8zM3 11h1v1h-1zM9 11h1v1h-1z"/><path id="g103" d="M1 1h9v1h-9zM0 3h8v1h-8zM1 5h6v1h-6zM1 6h1v2h-1zM6 6h1v2h-1zM1 8h6v1h-6zM9 2h1v9h-1zM6 11h3v1h-3z"/><path id="g104" d="M1 1h1v1h-1zM4 1h6v1h-6zM2 2h1v1h-1zM8 2h1v1h-1zM0 3h1v1h-1zM7 3h1v1h-1zM1 4h1v1h-1zM6 4h1v1h-1zM3 4h1v2h-1zM5 5h6v1h-6zM6 6h1v1h-1zM2 6h1v2h-1zM8 6h1v2h-1zM5 7h1v1h-1zM0 8h2v1h-2zM4 8h1v1h-1zM7 8h1v1h-1zM6 9h1v1h-1zM10 6h1v5h-1zM5 10h1v1h-1zM8 10h1v1h-1zM1 9h1v3h-1zM4 11h1v1h-1zM9 11h1v1h-1z"/><path id="g105" d="M0 1h11v1h-11zM6 2h1v2h-1zM5 4h1v1h-1zM4 5h2v1h-2zM7 5h1v1h-1zM3 6h1v1h-1zM8 6h1v1h-1zM2 7h1v1h-1zM9 7h1v1h-1zM1 8h1v1h-1zM10 8h1v1h-1zM0 9h1v1h-1zM5 6h1v6h-1z"/><path id="g106" d="M2 1h1v1h-1zM5 1h6v1h-6zM3 2h1v1h-1zM4 4h4v1h-4zM4 5h1v1h-1zM7 5h1v1h-1zM4 6h4v1h-4zM4 7h1v2h-1zM7 7h1v2h-1zM4 9h4v1h-4zM10 2h1v9h-1zM1 3h1v9h-1zM8 11h3v1h-3z"/><path id="g107" d="M9 1h2v1h-2zM3 1h1v2h-1zM0 2h2v1h-2zM5 2h1v1h-1zM7 2h2v1h-2zM2 3h3v1h-3zM0 3h1v2h-1zM7 3h1v2h-1zM3 4h1v1h-1zM0 5h6v1h-6zM7 5h4v1h-4zM0 6h1v1h-1zM2 6h2v1h-2zM3 7h2v1h-2zM0 7h2v2h-2zM5 8h1v1h-1zM7 6h1v4h-1zM3 8h1v2h-1zM0 9h1v1h-1zM0 10h5v1h-5zM6 10h1v1h-1zM9 6h1v6h-1zM5 11h1v1h-1z"/><path id="g108" d="M5 1h1v2h-1zM1 3h9v1h-9zM1 4h1v1h-1zM5 4h1v1h-1zM9 4h1v1h-1zM1 5h9v1h-9zM1 6h1v2h-1zM5 6h1v2h-1zM9 6h1v2h-1zM1 8h9v1h-9zM5 9h1v2h-1zM10 9h1v2h-1zM6 11h5v1h-5z"/><path id="g109" d="M1 1h1v1h-1zM4 1h7v1h-7zM2 2h1v1h-1zM8 2h1v1h-1zM0 3h1v1h-1zM6 3h5v1h-5zM4 2h1v3h-1zM1 4h1v1h-1zM6 4h1v1h-1zM10 4h1v1h-1zM3 5h2v1h-2zM6 5h5v1h-5zM6 6h1v1h-1zM10 6h1v1h-1zM2 6h1v2h-1zM6 7h5v1h-5zM0 8h2v1h-2zM8 8h1v1h-1zM4 6h1v4h-1zM6 9h1v1h-1zM8 9h2v1h-2zM1 9h1v2h-1zM3 10h1v1h-1zM5 10h1v1h-1zM8 10h1v1h-1zM10 10h1v2h-1zM1 11h2v1h-2zM4 11h1v1h-1zM7 11h2v1h-2z"/><path id="g110" d="M9 0h1v1h-1zM8 1h1v2h-1zM7 3h1v6h-1zM8 9h1v2h-1zM9 11h1v1h-1z"/><path id="g111" d="M2 1h1v1h-1zM6 1h1v1h-1zM1 2h1v1h-1zM3 2h8v1h-8zM0 3h1v1h-1zM6 3h1v1h-1zM2 4h8v1h-8zM1 5h1v1h-1zM3 5h1v1h-1zM5 5h1v1h-1zM7 5h1v1h-1zM9 5h1v1h-1zM0 6h2v1h-2zM3 6h7v1h-7zM1 7h1v1h-1zM1 8h10v1h-10zM4 9h1v1h-1zM6 9h1v1h-1zM9 9h1v1h-1zM1 9h1v2h-1zM3 10h2v1h-2zM8 10h1v1h-1zM10 10h1v1h-1zM1 11h2v1h-2zM4 11h5v1h-5z"/><path id="g112" d="M5 1h1v1h-1zM0 2h11v1h-11zM5 3h1v1h-1zM2 4h7v1h-7zM2 5h1v2h-1zM8 5h1v2h-1zM2 7h7v1h-7zM4 8h1v1h-1zM3 9h1v1h-1zM6 8h1v3h-1zM10 9h1v2h-1zM2 10h1v1h-1zM0 11h2v1h-2zM7 11h4v1h-4z"/><path id="g113" d="M3 0h1v1h-1zM4 1h1v2h-1zM5 3h1v6h-1zM4 9h1v2h-1zM3 11h1v1h-1z"/><path id="g114" d="M4 1h1v1h-1zM0 2h11v1h-11zM3 3h1v1h-1zM8 3h1v1h-1zM2 4h6v1h-6zM9 4h1v1h-1zM0 5h2v1h-2zM3 5h1v1h-1zM10 5h1v1h-1zM3 6h5v1h-5zM3 7h1v1h-1zM0 8h11v1h-11zM4 9h1v1h-1zM3 10h1v1h-1zM8 10h1v1h-1zM2 11h8v1h-8z"/><path id="g115" d="M1 1h1v1h-1zM5 1h1v1h-1zM2 2h1v1h-1zM5 2h6v1h-6zM0 3h1v1h-1zM4 3h1v1h-1zM1 4h1v1h-1zM5 4h5v1h-5zM3 4h1v2h-1zM5 5h1v1h-1zM7 5h1v1h-1zM9 5h1v1h-1zM4 6h7v1h-7zM2 6h1v2h-1zM4 7h1v2h-1zM7 7h1v2h-1zM9 7h1v2h-1zM0 8h2v1h-2zM4 9h7v1h-7zM9 10h1v1h-1zM1 9h1v3h-1zM7 11h2v1h-2z"/><path id="g116" d="M3 1h1v1h-1zM7 1h1v1h-1zM1 2h9v1h-9zM3 3h1v1h-1zM7 3h1v1h-1zM0 4h11v1h-11zM5 5h1v1h-1zM2 6h7v1h-7zM2 7h1v1h-1zM5 7h1v1h-1zM8 7h1v1h-1zM2 8h7v1h-7zM2 9h1v1h-1zM5 9h1v1h-1zM8 9h1v1h-1zM2 10h7v1h-7zM1 11h2v1h-2zM8 11h2v1h-2z"/><path id="g117" d="M3 1h1v1h-1zM3 2h7v1h-7zM2 3h1v1h-1zM1 4h1v1h-1zM3 4h6v1h-6zM0 5h1v1h-1zM2 6h6v1h-6zM7 7h1v3h-1zM10 8h1v3h-1zM8 10h1v1h-1zM9 11h2v1h-2z"/><path id="g118" d="M1 1h4v1h-4zM6 1h4v1h-4zM1 2h1v2h-1zM4 2h1v2h-1zM6 2h1v2h-1zM9 2h1v2h-1zM1 4h5v1h-5zM9 4h2v1h-2zM1 5h1v2h-1zM4 5h1v2h-1zM6 6h5v1h-5zM1 7h4v1h-4zM6 7h1v1h-1zM10 7h1v1h-1zM7 8h1v1h-1zM9 8h1v1h-1zM1 8h1v2h-1zM8 9h1v1h-1zM4 8h1v3h-1zM7 10h1v1h-1zM9 10h1v1h-1zM0 10h1v2h-1zM3 11h4v1h-4zM10 11h1v1h-1z"/><path id="g119" d="M3 1h1v2h-1zM8 1h1v2h-1zM6 2h1v2h-1zM2 3h1v2h-1zM9 3h1v2h-1zM5 4h1v1h-1zM1 5h2v1h-2zM4 5h1v1h-1zM10 5h1v1h-1zM0 6h1v1h-1zM5 6h5v1h-5zM6 7h1v3h-1zM9 7h1v4h-1zM5 10h1v1h-1zM2 6h1v6h-1zM4 11h1v1h-1zM8 11h2v1h-2z"/><path id="g120" d="M1 1h10v1h-10zM3 3h6v1h-6zM5 4h1v2h-1zM3 6h6v1h-6zM7 7h1v1h-1zM1 2h1v7h-1zM10 2h1v7h-1zM5 7h1v2h-1zM8 8h1v1h-1zM1 9h10v1h-10zM1 10h1v1h-1zM10 10h1v1h-1zM1 11h10v1h-10z"/><path id="g121" d="M2 1h1v2h-1zM8 1h1v2h-1zM6 2h1v2h-1zM0 3h5v1h-5zM9 3h1v2h-1zM2 4h1v2h-1zM5 4h1v2h-1zM10 5h1v2h-1zM2 6h2v1h-2zM7 6h1v2h-1zM1 7h2v1h-2zM4 7h1v1h-1zM0 8h1v1h-1zM6 8h1v2h-1zM9 9h1v2h-1zM5 10h1v1h-1zM2 8h1v4h-1zM5 11h4v1h-4zM10 11h1v1h-1z"/><path id="g122" d="M2 1h1v2h-1zM9 1h1v2h-1zM4 2h3v1h-3zM0 3h4v1h-4zM6 3h5v1h-5zM2 4h1v2h-1zM4 4h1v2h-1zM6 4h1v2h-1zM9 4h1v3h-1zM1 6h3v1h-3zM7 6h1v1h-1zM5 6h1v2h-1zM0 7h1v1h-1zM8 7h2v1h-2zM2 7h1v2h-1zM4 8h1v1h-1zM6 8h1v1h-1zM2 9h2v1h-2zM7 9h1v1h-1zM9 8h1v3h-1zM2 10h1v2h-1zM8 11h2v1h-2z"/><path id="g123" d="M1 1h1v1h-1zM2 2h1v1h-1zM7 1h1v3h-1zM0 3h1v1h-1zM5 2h1v3h-1zM1 4h1v1h-1zM7 4h3v1h-3zM3 4h1v2h-1zM5 5h3v1h-3zM4 6h2v1h-2zM9 5h1v3h-1zM2 6h1v2h-1zM7 6h1v2h-1zM0 8h2v1h-2zM7 8h3v1h-3zM7 9h1v1h-1zM5 7h1v4h-1zM10 9h1v2h-1zM1 9h1v3h-1zM6 11h5v1h-5z"/><path id="g124" d="M5 1h1v1h-1zM6 2h1v1h-1zM1 3h10v1h-10zM3 5h1v2h-1zM8 5h1v2h-1zM7 7h1v2h-1zM4 7h1v3h-1zM6 9h1v2h-1zM0 11h11v1h-11z"/><path id="g125" d="M8 1h1v1h-1zM9 2h1v1h-1zM6 1h1v3h-1zM0 4h11v1h-11zM1 6h4v1h-4zM6 5h1v3h-1zM3 7h1v3h-1zM7 8h1v2h-1zM10 9h1v2h-1zM3 10h2v1h-2zM8 10h1v1h-1zM0 11h3v1h-3zM9 11h2v1h-2z"/><path id="g126" d="M3 1h7v1h-7zM3 2h1v4h-1zM9 2h1v4h-1zM3 6h7v1h-7zM3 7h1v1h-1zM9 7h1v1h-1zM4 8h1v1h-1zM8 8h1v1h-1zM3 9h1v1h-1zM9 9h1v1h-1zM2 10h1v1h-1zM10 10h1v2h-1zM1 11h1v1h-1z"/><path id="g127" d="M1 1h9v1h-9zM5 2h1v3h-1zM0 5h11v1h-11zM4 6h1v2h-1zM3 8h1v2h-1zM6 6h1v5h-1zM10 9h1v2h-1zM2 10h1v1h-1zM0 11h2v1h-2zM7 11h4v1h-4z"/><path id="g128" d="M5 1h5v1h-5zM1 1h1v2h-1zM5 2h1v1h-1zM9 2h1v1h-1zM1 3h3v1h-3zM5 3h5v1h-5zM0 4h1v1h-1zM5 4h1v1h-1zM9 4h1v1h-1zM0 5h10v1h-10zM2 6h1v1h-1zM5 6h1v1h-1zM0 7h4v1h-4zM5 7h6v1h-6zM4 8h1v1h-1zM2 8h1v2h-1zM6 8h1v2h-1zM8 8h1v2h-1zM10 8h1v3h-1zM2 10h2v1h-2zM5 10h1v1h-1zM7 10h1v1h-1zM2 11h1v1h-1zM6 11h1v1h-1zM8 11h2v1h-2z"/><path id="g129" d="M5 1h1v2h-1zM4 3h1v1h-1zM6 3h1v1h-1zM3 4h1v1h-1zM7 4h1v1h-1zM2 5h1v1h-1zM8 5h1v1h-1zM1 6h1v1h-1zM9 6h2v1h-2zM5 5h1v7h-1z"/><path id="g130" d="M1 1h10v1h-10zM7 2h1v1h-1zM1 2h1v2h-1zM4 2h1v2h-1zM10 2h1v2h-1zM6 3h1v1h-1zM1 4h5v1h-5zM9 4h1v1h-1zM6 5h5v1h-5zM1 5h1v2h-1zM4 5h1v2h-1zM6 6h1v2h-1zM10 6h1v2h-1zM1 7h4v1h-4zM1 8h1v1h-1zM4 8h1v1h-1zM6 8h5v1h-5zM1 10h1v1h-1zM3 10h1v1h-1zM6 10h1v1h-1zM9 10h1v1h-1zM0 11h1v1h-1zM4 11h1v1h-1zM7 11h1v1h-1zM10 11h1v1h-1z"/><path id="g131" d="M7 1h1v1h-1zM2 1h1v2h-1zM4 2h7v1h-7zM0 3h5v1h-5zM10 3h1v1h-1zM6 4h1v1h-1zM8 4h1v1h-1zM2 4h1v2h-1zM5 5h1v1h-1zM9 5h1v1h-1zM2 6h3v1h-3zM10 6h1v1h-1zM1 7h2v1h-2zM5 7h5v1h-5zM0 8h1v1h-1zM2 8h1v3h-1zM7 8h1v3h-1zM0 11h3v1h-3zM4 11h7v1h-7z"/><path id="g132" d="M3 1h1v2h-1zM1 2h1v1h-1zM1 3h6v1h-6zM0 4h1v1h-1zM3 4h1v1h-1zM0 5h7v1h-7zM3 6h1v1h-1zM1 7h6v1h-6zM8 2h1v7h-1zM6 8h1v2h-1zM10 1h1v10h-1zM1 8h1v3h-1zM5 10h2v1h-2zM3 8h1v4h-1zM8 11h3v1h-3z"/><path id="g133" d="M8 1h2v1h-2zM2 1h1v2h-1zM5 2h3v1h-3zM0 3h6v1h-6zM5 4h1v1h-1zM2 4h1v2h-1zM5 5h5v1h-5zM1 6h3v1h-3zM5 6h1v1h-1zM9 6h1v2h-1zM1 7h2v1h-2zM4 7h3v1h-3zM0 8h1v1h-1zM5 8h1v1h-1zM7 8h2v1h-2zM8 9h1v1h-1zM2 8h1v3h-1zM4 9h1v2h-1zM7 10h1v1h-1zM9 10h1v1h-1zM2 11h2v1h-2zM5 11h2v1h-2zM10 11h1v1h-1z"/><path id="g134" d="M7 1h1v2h-1zM2 1h1v3h-1zM5 3h5v1h-5zM0 4h5v1h-5zM7 4h1v3h-1zM9 4h1v3h-1zM2 5h1v3h-1zM4 7h7v1h-7zM2 8h2v1h-2zM7 8h1v1h-1zM0 9h2v1h-2zM6 9h1v1h-1zM8 9h1v1h-1zM5 10h1v1h-1zM9 10h1v1h-1zM3 11h2v1h-2zM10 11h1v1h-1z"/><path id="g135" d="M5 1h1v3h-1zM1 4h9v1h-9zM5 5h1v2h-1zM4 7h1v2h-1zM3 9h1v1h-1zM9 5h1v6h-1zM2 10h1v1h-1zM1 11h1v1h-1zM6 11h3v1h-3z"/><path id="g136" d="M8 1h1v1h-1zM2 1h1v2h-1zM6 1h1v2h-1zM9 2h1v1h-1zM6 3h4v1h-4zM1 3h1v2h-1zM4 4h3v1h-3zM0 5h3v1h-3zM6 5h5v1h-5zM2 6h1v1h-1zM4 6h3v1h-3zM1 7h1v1h-1zM9 7h1v1h-1zM6 7h1v2h-1zM0 8h4v1h-4zM8 8h1v1h-1zM4 9h1v1h-1zM7 9h1v1h-1zM10 9h1v2h-1zM2 10h2v1h-2zM6 10h1v1h-1zM8 10h1v1h-1zM0 11h2v1h-2zM4 11h2v1h-2zM9 11h2v1h-2z"/><path id="g137" d="M8 1h1v1h-1zM2 1h1v2h-1zM6 1h1v2h-1zM8 2h3v1h-3zM4 2h1v2h-1zM6 3h2v1h-2zM9 3h1v1h-1zM1 3h1v2h-1zM3 4h2v1h-2zM6 4h1v1h-1zM10 4h1v1h-1zM0 5h3v1h-3zM5 5h5v1h-5zM2 6h1v1h-1zM1 7h1v1h-1zM5 6h1v3h-1zM9 6h1v3h-1zM0 8h4v1h-4zM7 7h1v3h-1zM4 9h1v1h-1zM2 10h2v1h-2zM6 10h2v1h-2zM10 10h1v1h-1zM0 11h2v1h-2zM4 11h2v1h-2zM7 11h4v1h-4z"/><path id="g138" d="M3 1h2v1h-2zM0 2h3v1h-3zM6 2h1v1h-1zM2 3h1v1h-1zM7 3h1v1h-1zM0 4h5v1h-5zM2 5h1v1h-1zM6 5h1v1h-1zM9 1h1v6h-1zM2 6h2v1h-2zM7 6h1v1h-1zM1 7h2v1h-2zM4 7h1v1h-1zM9 7h2v1h-2zM0 8h1v1h-1zM7 8h3v1h-3zM5 9h2v1h-2zM2 8h1v4h-1zM9 9h1v3h-1z"/><path id="g139" d="M1 1h1v1h-1zM7 1h1v2h-1zM5 2h1v1h-1zM2 2h1v2h-1zM5 3h5v1h-5zM4 4h1v1h-1zM7 4h1v1h-1zM0 5h3v1h-3zM4 5h7v1h-7zM5 7h5v1h-5zM5 8h1v1h-1zM9 8h1v1h-1zM2 6h1v4h-1zM5 9h5v1h-5zM1 10h1v1h-1zM3 10h1v1h-1zM0 11h1v1h-1zM4 11h7v1h-7z"/><path id="g140" d="M5 1h1v2h-1zM1 3h9v1h-9zM1 4h1v3h-1zM5 4h1v3h-1zM9 4h1v3h-1zM1 7h9v1h-9zM1 8h1v1h-1zM9 8h1v1h-1zM5 8h1v4h-1z"/><path id="g141" d="M5 1h1v1h-1zM6 2h1v3h-1zM9 5h1v1h-1zM1 6h1v3h-1zM10 6h1v3h-1zM0 9h1v1h-1zM3 3h1v8h-1zM8 8h1v3h-1zM4 11h5v1h-5z"/><path id="g142" d="M1 1h1v1h-1zM4 1h7v1h-7zM2 2h1v1h-1zM4 2h1v1h-1zM10 2h1v1h-1zM5 3h1v1h-1zM8 3h1v1h-1zM0 4h1v1h-1zM4 4h1v1h-1zM9 4h1v1h-1zM7 4h1v2h-1zM1 5h1v1h-1zM4 6h7v1h-7zM2 6h1v2h-1zM7 7h1v1h-1zM0 8h2v1h-2zM6 8h3v1h-3zM5 9h1v1h-1zM9 9h1v1h-1zM3 10h2v1h-2zM10 10h1v1h-1zM1 9h1v3h-1zM7 9h1v3h-1z"/><path id="g143" d="M2 1h1v3h-1zM5 1h1v3h-1zM0 4h6v1h-6zM2 5h1v3h-1zM5 5h1v3h-1zM2 8h4v1h-4zM7 2h1v8h-1zM0 9h2v1h-2zM4 9h1v1h-1zM3 10h1v1h-1zM10 1h1v11h-1zM2 11h1v1h-1z"/><path id="g144" d="M5 1h1v2h-1zM0 3h11v1h-11zM5 4h1v1h-1zM2 5h8v1h-8zM9 6h1v4h-1zM7 9h1v1h-1zM2 6h1v5h-1zM8 10h1v1h-1zM5 6h1v6h-1z"/><path id="g145" d="M3 1h1v1h-1zM7 1h1v1h-1zM0 2h11v1h-11zM3 3h1v1h-1zM7 3h1v1h-1zM5 4h1v1h-1zM2 5h7v1h-7zM2 6h1v2h-1zM5 6h1v2h-1zM8 6h1v2h-1zM0 8h11v1h-11zM4 9h1v1h-1zM6 9h1v1h-1zM2 10h2v1h-2zM7 10h2v1h-2zM0 11h2v1h-2zM9 11h2v1h-2z"/><path id="g146" d="M0 2h11v1h-11zM2 4h4v1h-4zM2 5h1v2h-1zM5 5h1v2h-1zM2 7h4v1h-4zM2 8h1v1h-1zM5 8h1v1h-1zM8 3h1v8h-1zM6 11h3v1h-3z"/><path id="g147" d="M4 1h1v1h-1zM7 1h1v2h-1zM10 1h1v2h-1zM0 2h5v1h-5zM4 3h7v1h-7zM2 3h1v2h-1zM1 5h10v1h-10zM6 6h1v1h-1zM2 6h1v2h-1zM4 7h7v1h-7zM2 8h3v1h-3zM0 9h2v1h-2zM6 8h1v3h-1zM8 8h1v3h-1zM10 8h1v3h-1zM4 9h1v3h-1zM9 11h2v1h-2z"/><path id="g148" d="M2 1h1v2h-1zM7 1h1v2h-1zM0 3h11v1h-11zM7 4h1v1h-1zM2 4h1v2h-1zM4 5h6v1h-6zM2 6h2v1h-2zM5 6h1v2h-1zM9 6h1v2h-1zM1 7h2v1h-2zM0 8h1v1h-1zM6 8h1v1h-1zM8 8h1v1h-1zM7 9h1v1h-1zM2 8h1v3h-1zM6 10h1v1h-1zM8 10h1v1h-1zM0 11h3v1h-3zM4 11h2v1h-2zM9 11h2v1h-2z"/><path id="g149" d="M1 1h9v1h-9zM3 2h1v4h-1zM7 2h1v4h-1zM0 6h11v1h-11zM3 7h1v1h-1zM2 8h1v2h-1zM1 10h1v1h-1zM7 7h1v5h-1zM0 11h1v1h-1z"/><path id="g150" d="M1 1h1v1h-1zM7 1h3v1h-3zM2 2h5v1h-5zM9 2h1v1h-1zM4 3h1v1h-1zM6 3h1v1h-1zM8 3h1v1h-1zM0 4h1v1h-1zM3 4h8v1h-8zM1 5h1v1h-1zM4 5h1v1h-1zM8 5h1v1h-1zM6 5h1v2h-1zM2 6h2v1h-2zM9 6h1v1h-1zM2 7h9v1h-9zM0 8h2v1h-2zM4 8h1v1h-1zM6 8h1v1h-1zM9 8h1v1h-1zM4 9h6v1h-6zM4 10h1v1h-1zM6 10h1v1h-1zM9 10h1v1h-1zM1 9h1v3h-1zM4 11h6v1h-6z"/><path id="g151" d="M6 1h1v1h-1zM0 2h4v1h-4zM6 2h5v1h-5zM3 3h4v1h-4zM8 3h1v1h-1zM0 3h1v2h-1zM3 4h1v1h-1zM7 4h1v1h-1zM10 4h1v1h-1zM0 5h4v1h-4zM5 5h2v1h-2zM8 5h3v1h-3zM3 6h1v1h-1zM0 6h1v2h-1zM3 7h8v1h-8zM0 8h4v1h-4zM6 8h1v2h-1zM0 9h1v1h-1zM3 9h1v1h-1zM8 8h1v3h-1zM10 9h1v2h-1zM5 10h1v1h-1zM3 11h2v1h-2zM8 11h3v1h-3z"/><path id="g152" d="M5 1h6v1h-6zM2 1h1v2h-1zM0 2h1v1h-1zM4 2h2v1h-2zM10 2h1v1h-1zM1 3h3v1h-3zM7 3h1v1h-1zM2 4h1v1h-1zM5 4h6v1h-6zM0 5h5v1h-5zM6 5h1v1h-1zM5 6h1v1h-1zM8 6h1v1h-1zM5 7h5v1h-5zM3 6h1v3h-1zM8 8h1v1h-1zM3 9h8v1h-8zM1 6h1v5h-1zM3 10h1v1h-1zM8 10h1v2h-1zM0 11h1v1h-1z"/><path id="g153" d="M0 1h1v1h-1zM6 1h1v1h-1zM1 2h1v1h-1zM3 2h8v1h-8zM5 3h1v1h-1zM0 4h1v1h-1zM4 4h1v1h-1zM8 4h1v1h-1zM1 5h1v1h-1zM3 5h7v1h-7zM9 6h1v1h-1zM2 6h1v2h-1zM0 8h2v1h-2zM4 7h1v4h-1zM8 7h1v4h-1zM10 9h1v2h-1zM6 7h1v5h-1zM1 9h1v3h-1zM3 11h1v1h-1zM9 11h2v1h-2z"/><path id="g154" d="M6 1h1v1h-1zM8 1h1v1h-1zM2 1h1v2h-1zM4 2h7v1h-7zM0 3h4v1h-4zM6 3h1v1h-1zM8 3h1v1h-1zM2 4h1v1h-1zM5 4h5v1h-5zM2 5h2v1h-2zM5 5h1v1h-1zM9 5h1v1h-1zM4 6h6v1h-6zM1 6h2v2h-2zM5 7h1v1h-1zM9 7h1v1h-1zM0 8h1v1h-1zM4 8h7v1h-7zM7 9h1v1h-1zM6 10h1v1h-1zM8 10h1v1h-1zM2 8h1v4h-1zM4 11h2v1h-2zM9 11h2v1h-2z"/><path id="g155" d="M5 1h1v2h-1zM1 3h10v1h-10zM4 4h1v1h-1zM6 4h1v2h-1zM3 5h1v1h-1zM2 6h8v1h-8zM3 8h1v1h-1zM8 8h1v1h-1zM2 9h1v1h-1zM9 9h1v1h-1zM6 7h1v4h-1zM1 10h1v1h-1zM10 10h1v1h-1zM4 11h3v1h-3z"/><path id="g156" d="M4 1h2v1h-2zM1 2h3v1h-3zM3 3h1v1h-1zM7 3h4v1h-4zM0 4h6v1h-6zM3 5h1v1h-1zM2 6h3v1h-3zM2 7h2v1h-2zM5 7h1v2h-1zM1 8h1v1h-1zM7 4h1v6h-1zM10 4h1v6h-1zM0 9h1v1h-1zM7 10h4v1h-4zM3 8h1v4h-1z"/><path id="g157" d="M5 2h4v1h-4zM2 1h1v3h-1zM5 3h1v1h-1zM0 4h6v1h-6zM2 5h1v1h-1zM5 5h1v2h-1zM1 6h3v1h-3zM1 7h2v1h-2zM4 7h2v1h-2zM0 8h1v2h-1zM5 8h1v2h-1zM8 3h1v8h-1zM2 8h1v3h-1zM4 10h1v1h-1zM10 10h1v1h-1zM2 11h2v1h-2zM8 11h3v1h-3z"/><path id="g158" d="M1 1h1v1h-1zM5 1h4v1h-4zM2 2h1v1h-1zM5 2h1v2h-1zM8 2h1v2h-1zM4 4h1v1h-1zM8 4h3v1h-3zM0 5h3v1h-3zM4 6h6v1h-6zM5 7h1v1h-1zM9 7h1v1h-1zM2 6h1v3h-1zM6 8h1v1h-1zM8 8h1v1h-1zM2 9h2v1h-2zM7 9h1v1h-1zM2 10h1v1h-1zM6 10h1v1h-1zM8 10h1v1h-1zM3 11h3v1h-3zM9 11h2v1h-2z"/><path id="g159" d="M7 1h1v1h-1zM4 2h7v1h-7zM2 1h1v3h-1zM4 3h1v1h-1zM10 3h1v1h-1zM2 4h2v1h-2zM5 4h1v1h-1zM9 4h1v1h-1zM4 5h1v1h-1zM7 5h1v1h-1zM10 5h1v1h-1zM0 4h1v3h-1zM6 6h1v1h-1zM8 6h1v1h-1zM4 7h2v1h-2zM9 7h2v1h-2zM2 5h1v4h-1zM5 8h5v1h-5zM3 9h1v1h-1zM5 9h1v1h-1zM9 9h1v1h-1zM1 9h1v2h-1zM4 10h6v1h-6zM0 11h1v1h-1zM5 11h1v1h-1zM9 11h1v1h-1z"/><path id="g160" d="M1 1h4v1h-4zM6 1h4v1h-4zM1 2h1v2h-1zM4 2h1v2h-1zM6 2h1v2h-1zM9 2h1v2h-1zM1 4h4v1h-4zM6 4h4v1h-4zM5 5h1v1h-1zM8 5h1v1h-1zM0 6h11v1h-11zM3 7h1v1h-1zM7 7h1v1h-1zM0 8h5v1h-5zM6 8h5v1h-5zM1 9h1v2h-1zM4 9h1v2h-1zM6 9h1v2h-1zM9 9h1v2h-1zM1 11h4v1h-4zM6 11h4v1h-4z"/><path id="g161" d="M6 1h1v1h-1zM2 2h9v1h-9zM4 4h6v1h-6zM4 5h1v1h-1zM7 5h1v1h-1zM4 6h7v1h-7zM7 7h1v1h-1zM2 3h1v7h-1zM4 7h1v3h-1zM8 8h1v2h-1zM6 9h1v1h-1zM10 9h1v1h-1zM1 10h1v1h-1zM4 10h2v1h-2zM9 10h2v1h-2zM7 10h1v2h-1zM0 11h1v1h-1zM4 11h1v1h-1zM10 11h1v1h-1z"/><path id="g162" d="M6 1h1v1h-1zM1 2h10v1h-10zM4 4h1v2h-1zM6 4h1v2h-1zM8 4h1v2h-1zM1 3h1v4h-1zM3 6h1v1h-1zM5 6h3v1h-3zM9 6h1v1h-1zM1 7h2v1h-2zM6 7h1v1h-1zM10 7h1v1h-1zM3 8h7v1h-7zM1 8h1v2h-1zM6 9h1v2h-1zM0 10h1v2h-1zM2 11h9v1h-9z"/></defs></svg>
<div style="left:0;top:0;width:1645px;height:16px;background:#0078d7;border-bottom:1px solid #3a6282"></div>
<div style="left:0;top:14px;width:1645px;height:1px;background:#1f6fb5"></div>
<div style="left:0;top:0;width:3px;height:16px;background:#2a6aa6"></div>
<div style="left:3px;top:0;width:100px;height:16px;background:#b5bfea"></div>
<div style="left:103px;top:0;width:2px;height:16px;background:#1f5fb0"></div>
<div style="left:105px;top:0;width:100px;height:16px;background:#fff"></div>
<div style="left:5px;top:0;height:15px;line-height:15px"><svg class="g"><use href="#g0"/></svg><svg class="g"><use href="#g1"/></svg><svg class="g"><use href="#g2"/></svg><svg class="g"><use href="#g3"/></svg></div>
<div style="left:107px;top:0;height:15px;line-height:15px"><svg class="g"><use href="#g4"/></svg><svg class="g"><use href="#g5"/></svg><svg class="g"><use href="#g6"/></svg><svg class="g"><use href="#g7"/></svg><svg class="g"><use href="#g8"/></svg><svg class="g"><use href="#g9"/></svg><span style="position:static;font-size:12px">...</span></div>
<div style="left:193px;top:2px;width:9px;height:9px"><svg width="9" height="9" viewBox="0 0 9 9"><path d="M0.5 0.5L8.5 8.5M8.5 0.5L0.5 8.5" stroke="#555" stroke-width="1"/></svg></div>
<div class="lb" style="left:6px;top:44px"><svg class="g"><use href="#g10"/></svg><svg class="g"><use href="#g11"/></svg><svg class="g"><use href="#g12"/></svg><svg class="g" style="width:6px"><path d="M2 3h1v1h-1zM2 9h1v1h-1z"/></svg><svg class="g"><use href="#g13"/></svg></div>
<div class="lb" style="left:6px;top:69px"><svg class="g"><use href="#g10"/></svg><svg class="g"><use href="#g14"/></svg><svg class="g"><use href="#g6"/></svg></div>
<div class="lb" style="left:6px;top:96px"><svg class="g"><use href="#g10"/></svg><svg class="g"><use href="#g15"/></svg><svg class="g"><use href="#g16"/></svg><svg class="g"><use href="#g17"/></svg><svg class="g"><use href="#g18"/></svg></div>
<div class="lb" style="left:6px;top:122px"><svg class="g"><use href="#g10"/></svg><svg class="g"><use href="#g15"/></svg><svg class="g"><use href="#g19"/></svg><svg class="g"><use href="#g17"/></svg><svg class="g"><use href="#g18"/></svg></div>
<div class="lb" style="left:271px;top:69px"><svg class="g"><use href="#g10"/></svg><svg class="g"><use href="#g20"/></svg><svg class="g"><use href="#g21"/></svg></div>
<div class="lb" style="left:271px;top:96px"><svg class="g"><use href="#g10"/></svg><svg class="g"><use href="#g15"/></svg><svg class="g"><use href="#g22"/></svg><svg class="g"><use href="#g17"/></svg><svg class="g"><use href="#g18"/></svg></div>
<div class="lb" style="left:271px;top:122px"><svg class="g"><use href="#g10"/></svg><svg class="g"><use href="#g15"/></svg><svg class="g"><use href="#g23"/></svg><svg class="g"><use href="#g17"/></svg><svg class="g"><use href="#g18"/></svg></div>
<div class="lb" style="left:552px;top:69px"><svg class="g"><use href="#g10"/></svg><svg class="g"><use href="#g24"/></svg><svg class="g"><use href="#g25"/></svg></div>
<div class="lb" style="left:552px;top:96px"><svg class="g"><use href="#g10"/></svg><svg class="g"><use href="#g15"/></svg><svg class="g"><use href="#g26"/></svg><svg class="g"><use href="#g17"/></svg><svg class="g"><use href="#g18"/></svg></div>
<div class="lb" style="left:189px;top:44px"><svg class="g"><use href="#g27"/></svg></div>
<div class="box" style="left:81px;top:45px;width:100px;height:24px"></div>
<div style="left:86px;top:44px;height:24px;line-height:24px;font-size:11px">2023-01-01</div>
<div class="dd" style="left:162px;top:47px"><svg width="10" height="8" viewBox="0 0 10 8"><polyline points="1,2 5,6 9,2" fill="none" stroke="#404040" stroke-width="1.2"/></svg></div>
<div class="box" style="left:207px;top:45px;width:100px;height:24px"></div>
<div style="left:212px;top:44px;height:24px;line-height:24px;font-size:11px">2023-12-31</div>
<div class="dd" style="left:288px;top:47px"><svg width="10" height="8" viewBox="0 0 10 8"><polyline points="1,2 5,6 9,2" fill="none" stroke="#404040" stroke-width="1.2"/></svg></div>
<div class="box" style="left:81px;top:68px;width:158px;height:25px;background:#80ffff;box-shadow:inset 0 0 0 1px #fff"></div>
<div class="box" style="left:81px;top:94px;width:158px;height:25px"></div><div class="dd" style="left:220px;top:96px"><svg width="10" height="8" viewBox="0 0 10 8"><polyline points="1,2 5,6 9,2" fill="none" stroke="#404040" stroke-width="1.2"/></svg></div>
<div class="box" style="left:81px;top:118px;width:158px;height:24px"></div><div class="dd" style="left:220px;top:120px"><svg width="10" height="8" viewBox="0 0 10 8"><polyline points="1,2 5,6 9,2" fill="none" stroke="#404040" stroke-width="1.2"/></svg></div>
<div class="box" style="left:347px;top:69px;width:158px;height:24px"></div>
<div class="box" style="left:347px;top:94px;width:158px;height:25px"></div><div class="dd" style="left:486px;top:96px"><svg width="10" height="8" viewBox="0 0 10 8"><polyline points="1,2 5,6 9,2" fill="none" stroke="#404040" stroke-width="1.2"/></svg></div>
<div class="box" style="left:347px;top:118px;width:158px;height:24px"></div><div class="dd" style="left:486px;top:120px"><svg width="10" height="8" viewBox="0 0 10 8"><polyline points="1,2 5,6 9,2" fill="none" stroke="#404040" stroke-width="1.2"/></svg></div>
<div class="box" style="left:618px;top:69px;width:158px;height:24px"></div>
<div class="box" style="left:618px;top:94px;width:158px;height:24px"></div><div class="dd" style="left:757px;top:96px"><svg width="10" height="8" viewBox="0 0 10 8"><polyline points="1,2 5,6 9,2" fill="none" stroke="#404040" stroke-width="1.2"/></svg></div>
<div class="qb" style="left:347px"><svg class="g"><use href="#g28"/></svg><svg class="g"><use href="#g29"/></svg></div>
<div class="qb" style="left:387px"><svg class="g"><use href="#g30"/></svg><svg class="g"><use href="#g29"/></svg></div>
<div class="qb" style="left:427px"><svg class="g"><use href="#g31"/></svg><svg class="g"><use href="#g29"/></svg></div>
<div class="qb" style="left:467px"><svg class="g"><use href="#g32"/></svg><svg class="g"><use href="#g33"/></svg></div>
<div class="qb" style="left:507px"><svg class="g"><use href="#g30"/></svg><svg class="g"><use href="#g33"/></svg></div>
<div class="qb" style="left:547px"><svg class="g"><use href="#g31"/></svg><svg class="g"><use href="#g33"/></svg></div>
<div class="qb" style="left:587px"><svg class="g"><use href="#g28"/></svg><svg class="g"><use href="#g34"/></svg></div>
<div class="qb" style="left:627px"><svg class="g"><use href="#g35"/></svg><svg class="g"><use href="#g36"/></svg></div>
<div class="qb" style="left:667px"><svg style="position:absolute;left:12px;top:1px" width="14" height="18" viewBox="0 0 14 18"><rect x="0" y="0" width="14" height="18" fill="#fafafa"/><path d="M2.5 2.5L7.5 9" stroke="#8a9aa0" stroke-width="1.6"/><path d="M11.5 2.5L6.5 9" stroke="#b0b8bc" stroke-width="2.2"/><path d="M7.2 8.5L3 16.5" stroke="#1f4fb0" stroke-width="2.6" stroke-linecap="round"/><path d="M6.8 8.5L11 16.5" stroke="#d02828" stroke-width="2.6" stroke-linecap="round"/></svg></div>
<div class="ab" style="left:709px;border:2px solid #0078d7"><div style="left:1px;top:1px;width:70px;height:19px;border:1px dotted #000"></div></div>
<div class="ab" style="left:787px"></div>
<div class="ab" style="left:865px"></div>
<div style="left:724px;top:124px;width:20px;height:20px"><svg width="20" height="20" viewBox="0 0 20 20"><path d="M5.5 6.5V2.5H14L16.5 5" fill="none" stroke="#7a7a7a" stroke-width="1"/><path d="M13 5.5H16.6V15.8" fill="none" stroke="#000" stroke-width="1.2"/><path d="M5 15.5H10" stroke="#000" stroke-width="1.2"/><path d="M9.2 12.2L15 17.6" stroke="#000a80" stroke-width="2.6"/><path d="M9.6 12.4L14.6 17" stroke="#7090f0" stroke-width="0.6"/><circle cx="6.4" cy="9.5" r="3.1" fill="#8ee8f6" stroke="#000" stroke-width="1"/></svg></div>
<div style="left:743px;top:124px;height:25px;line-height:25px"><svg class="g"><use href="#g37"/></svg><svg class="g"><use href="#g38"/></svg></div>
<div style="left:804px;top:126px;width:16px;height:16px"><svg width="16" height="16" viewBox="0 0 16 16"><rect x="1" y="1" width="14" height="14" fill="#d8f4d8" stroke="#237a34" stroke-width="2"/><path d="M4 4.5L11 12" stroke="#237a34" stroke-width="3.6"/><path d="M11.5 4L5 12" stroke="#237a34" stroke-width="2.6"/><path d="M4.5 5L11 11.5" stroke="#c8f0c8" stroke-width="0.8"/></svg></div>
<div style="left:821px;top:124px;height:25px;line-height:25px"><svg class="g"><use href="#g2"/></svg><svg class="g"><use href="#g4"/></svg></div>
<div style="left:879px;top:124px;width:20px;height:20px"><svg width="20" height="20" viewBox="0 0 20 20"><path d="M3 12.5H15.6" stroke="#000" stroke-width="1.2"/><path d="M4.5 12.5V2.5H11.7V12.5" fill="none" stroke="#000" stroke-width="1.2"/><path d="M5 3.6L8.6 6.2V16.6L5 13Z" fill="#8fa032" stroke="#000" stroke-width="1"/><path d="M13 7.4L16.6 4V6.2H19.6V8.6H16.6V10.8Z" fill="#0a0a90"/></svg></div>
<div style="left:899px;top:124px;height:25px;line-height:25px"><svg class="g"><use href="#g39"/></svg><svg class="g"><use href="#g40"/></svg></div>
<div style="left:0px;top:152px;width:348px;height:1px;background:#a8a8a8"></div>
<div style="left:181px;top:155px;width:149px;height:15px;background:#f0f0f0"></div>
<div style="left:0;top:153px;width:10px;height:691px;background:#f0f0f0"></div>
<div style="left:0px;top:171px;width:330px;height:1px;background:#000"></div>
<div style="left:10px;top:153px;width:1px;height:691px;background:#000"></div>
<div style="left:0px;top:152px;width:1px;height:692px;background:#a8a8a8"></div>
<div style="left:43px;top:153px;width:1px;height:18px;background:#e4e4e4"></div>
<div style="left:43px;top:172px;width:1px;height:672px;background:#c0c0c0"></div>
<div style="left:138px;top:153px;width:1px;height:18px;background:#e4e4e4"></div>
<div style="left:138px;top:172px;width:1px;height:672px;background:#c0c0c0"></div>
<div style="left:180px;top:153px;width:1px;height:18px;background:#e4e4e4"></div>
<div style="left:180px;top:172px;width:1px;height:672px;background:#c0c0c0"></div>
<div style="left:11px;top:195px;width:319px;height:1px;background:#c0c0c0"></div>
<div style="left:0px;top:195px;width:10px;height:1px;background:#000"></div>
<div style="left:11px;top:219px;width:319px;height:1px;background:#c0c0c0"></div>
<div style="left:0px;top:219px;width:10px;height:1px;background:#000"></div>
<div style="left:11px;top:243px;width:319px;height:1px;background:#c0c0c0"></div>
<div style="left:0px;top:243px;width:10px;height:1px;background:#000"></div>
<div style="left:11px;top:267px;width:319px;height:1px;background:#c0c0c0"></div>
<div style="left:0px;top:267px;width:10px;height:1px;background:#000"></div>
<div style="left:11px;top:291px;width:319px;height:1px;background:#c0c0c0"></div>
<div style="left:0px;top:291px;width:10px;height:1px;background:#000"></div>
<div style="left:11px;top:315px;width:319px;height:1px;background:#c0c0c0"></div>
<div style="left:0px;top:315px;width:10px;height:1px;background:#000"></div>
<div style="left:11px;top:339px;width:319px;height:1px;background:#c0c0c0"></div>
<div style="left:0px;top:339px;width:10px;height:1px;background:#000"></div>
<div style="left:11px;top:363px;width:319px;height:1px;background:#c0c0c0"></div>
<div style="left:0px;top:363px;width:10px;height:1px;background:#000"></div>
<div style="left:11px;top:387px;width:319px;height:1px;background:#c0c0c0"></div>
<div style="left:0px;top:387px;width:10px;height:1px;background:#000"></div>
<div style="left:11px;top:411px;width:319px;height:1px;background:#c0c0c0"></div>
<div style="left:0px;top:411px;width:10px;height:1px;background:#000"></div>
<div style="left:11px;top:435px;width:319px;height:1px;background:#c0c0c0"></div>
<div style="left:0px;top:435px;width:10px;height:1px;background:#000"></div>
<div style="left:11px;top:459px;width:319px;height:1px;background:#c0c0c0"></div>
<div style="left:0px;top:459px;width:10px;height:1px;background:#000"></div>
<div style="left:11px;top:483px;width:319px;height:1px;background:#c0c0c0"></div>
<div style="left:0px;top:483px;width:10px;height:1px;background:#000"></div>
<div style="left:11px;top:507px;width:319px;height:1px;background:#c0c0c0"></div>
<div style="left:0px;top:507px;width:10px;height:1px;background:#000"></div>
<div style="left:11px;top:531px;width:319px;height:1px;background:#c0c0c0"></div>
<div style="left:0px;top:531px;width:10px;height:1px;background:#000"></div>
<div style="left:11px;top:555px;width:319px;height:1px;background:#c0c0c0"></div>
<div style="left:0px;top:555px;width:10px;height:1px;background:#000"></div>
<div style="left:11px;top:579px;width:319px;height:1px;background:#c0c0c0"></div>
<div style="left:0px;top:579px;width:10px;height:1px;background:#000"></div>
<div style="left:11px;top:603px;width:319px;height:1px;background:#c0c0c0"></div>
<div style="left:0px;top:603px;width:10px;height:1px;background:#000"></div>
<div style="left:11px;top:627px;width:319px;height:1px;background:#c0c0c0"></div>
<div style="left:0px;top:627px;width:10px;height:1px;background:#000"></div>
<div style="left:11px;top:651px;width:319px;height:1px;background:#c0c0c0"></div>
<div style="left:0px;top:651px;width:10px;height:1px;background:#000"></div>
<div style="left:11px;top:675px;width:319px;height:1px;background:#c0c0c0"></div>
<div style="left:0px;top:675px;width:10px;height:1px;background:#000"></div>
<div style="left:11px;top:699px;width:319px;height:1px;background:#c0c0c0"></div>
<div style="left:0px;top:699px;width:10px;height:1px;background:#000"></div>
<div style="left:11px;top:723px;width:319px;height:1px;background:#c0c0c0"></div>
<div style="left:0px;top:723px;width:10px;height:1px;background:#000"></div>
<div style="left:11px;top:747px;width:319px;height:1px;background:#c0c0c0"></div>
<div style="left:0px;top:747px;width:10px;height:1px;background:#000"></div>
<div style="left:11px;top:771px;width:319px;height:1px;background:#c0c0c0"></div>
<div style="left:0px;top:771px;width:10px;height:1px;background:#000"></div>
<div style="left:11px;top:795px;width:319px;height:1px;background:#c0c0c0"></div>
<div style="left:0px;top:795px;width:10px;height:1px;background:#000"></div>
<div style="left:11px;top:819px;width:319px;height:1px;background:#c0c0c0"></div>
<div style="left:0px;top:819px;width:10px;height:1px;background:#000"></div>
<div style="left:11px;top:843px;width:319px;height:1px;background:#c0c0c0"></div>
<div style="left:0px;top:843px;width:10px;height:1px;background:#000"></div>
<div class="h" style="left:11px;top:153px;width:32px;height:18px"><svg class="g"><use href="#g41"/></svg><svg class="g"><use href="#g42"/></svg></div>
<div class="h" style="left:44px;top:153px;width:94px;height:18px"><svg class="g"><use href="#g43"/></svg><svg class="g"><use href="#g44"/></svg><svg class="g"><use href="#g18"/></svg><svg class="g"><use href="#g45"/></svg></div>
<div class="h" style="left:139px;top:153px;width:41px;height:18px"><svg class="g"><use href="#g46"/></svg><svg class="g"><use href="#g47"/></svg></div>
<div style="left:20px;top:177px;width:13px;height:13px"><svg width="13" height="13" viewBox="0 0 13 13"><rect x="0.5" y="0.5" width="12" height="12" fill="#fff" stroke="#333" stroke-width="1"/><polyline points="2.6,6.6 5,9 10.6,3.4" fill="none" stroke="#333" stroke-width="1.4"/></svg></div>
<div class="c" style="left:44px;top:172px;width:94px"><svg class="g"><use href="#g48"/></svg><svg class="g"><use href="#g49"/></svg><svg class="g"><use href="#g5"/></svg><svg class="g"><use href="#g6"/></svg><svg class="g"><use href="#g43"/></svg></div>
<div class="c" style="left:139px;top:172px;width:41px"><svg class="g"><use href="#g5"/></svg><svg class="g"><use href="#g6"/></svg></div>
<div style="left:20px;top:201px;width:13px;height:13px"><svg width="13" height="13" viewBox="0 0 13 13"><rect x="0.5" y="0.5" width="12" height="12" fill="#fff" stroke="#333" stroke-width="1"/><polyline points="2.6,6.6 5,9 10.6,3.4" fill="none" stroke="#333" stroke-width="1.4"/></svg></div>
<div class="c" style="left:44px;top:196px;width:94px"><svg class="g"><use href="#g50"/></svg><svg class="g"><use href="#g51"/></svg><svg class="g"><use href="#g52"/></svg><svg class="g"><use href="#g53"/></svg><svg class="g"><use href="#g43"/></svg></div>
<div class="c" style="left:139px;top:196px;width:41px"><svg class="g"><use href="#g5"/></svg><svg class="g"><use href="#g6"/></svg></div>
<div style="left:20px;top:225px;width:13px;height:13px"><svg width="13" height="13" viewBox="0 0 13 13"><rect x="0.5" y="0.5" width="12" height="12" fill="#fff" stroke="#333" stroke-width="1"/><polyline points="2.6,6.6 5,9 10.6,3.4" fill="none" stroke="#333" stroke-width="1.4"/></svg></div>
<div class="c" style="left:44px;top:220px;width:94px"><svg class="g"><use href="#g24"/></svg><svg class="g"><use href="#g54"/></svg><svg class="g"><use href="#g5"/></svg><svg class="g"><use href="#g6"/></svg><svg class="g"><use href="#g43"/></svg></div>
<div class="c" style="left:139px;top:220px;width:41px"><svg class="g"><use href="#g5"/></svg><svg class="g"><use href="#g6"/></svg></div>
<div style="left:20px;top:249px;width:13px;height:13px"><svg width="13" height="13" viewBox="0 0 13 13"><rect x="0.5" y="0.5" width="12" height="12" fill="#fff" stroke="#333" stroke-width="1"/><polyline points="2.6,6.6 5,9 10.6,3.4" fill="none" stroke="#333" stroke-width="1.4"/></svg></div>
<div class="c" style="left:44px;top:244px;width:94px"><svg class="g"><use href="#g55"/></svg><svg class="g"><use href="#g56"/></svg><svg class="g"><use href="#g5"/></svg><svg class="g"><use href="#g6"/></svg><svg class="g"><use href="#g43"/></svg></div>
<div class="c" style="left:139px;top:244px;width:41px"><svg class="g"><use href="#g5"/></svg><svg class="g"><use href="#g6"/></svg></div>
<div style="left:20px;top:273px;width:13px;height:13px"><svg width="13" height="13" viewBox="0 0 13 13"><rect x="0.5" y="0.5" width="12" height="12" fill="#fff" stroke="#333" stroke-width="1"/><polyline points="2.6,6.6 5,9 10.6,3.4" fill="none" stroke="#333" stroke-width="1.4"/></svg></div>
<div class="c" style="left:44px;top:268px;width:94px"><svg class="g"><use href="#g57"/></svg><svg class="g"><use href="#g21"/></svg><svg class="g"><use href="#g43"/></svg></div>
<div class="c" style="left:139px;top:268px;width:41px"><svg class="g"><use href="#g5"/></svg><svg class="g"><use href="#g6"/></svg></div>
<div style="left:20px;top:297px;width:13px;height:13px"><svg width="13" height="13" viewBox="0 0 13 13"><rect x="0.5" y="0.5" width="12" height="12" fill="#fff" stroke="#333" stroke-width="1"/><polyline points="2.6,6.6 5,9 10.6,3.4" fill="none" stroke="#333" stroke-width="1.4"/></svg></div>
<div class="c" style="left:44px;top:292px;width:94px"><svg class="g"><use href="#g58"/></svg><svg class="g"><use href="#g59"/></svg><svg class="g"><use href="#g52"/></svg><svg class="g"><use href="#g21"/></svg><svg class="g"><use href="#g43"/></svg></div>
<div class="c" style="left:139px;top:292px;width:41px"><svg class="g"><use href="#g5"/></svg><svg class="g"><use href="#g6"/></svg></div>
<div style="left:20px;top:321px;width:13px;height:13px"><svg width="13" height="13" viewBox="0 0 13 13"><rect x="0.5" y="0.5" width="12" height="12" fill="#fff" stroke="#333" stroke-width="1"/><polyline points="2.6,6.6 5,9 10.6,3.4" fill="none" stroke="#333" stroke-width="1.4"/></svg></div>
<div class="c" style="left:44px;top:316px;width:94px"><svg class="g"><use href="#g60"/></svg><svg class="g"><use href="#g61"/></svg><svg class="g"><use href="#g5"/></svg><svg class="g"><use href="#g6"/></svg><svg class="g"><use href="#g43"/></svg></div>
<div class="c" style="left:139px;top:316px;width:41px"><svg class="g"><use href="#g5"/></svg><svg class="g"><use href="#g6"/></svg></div>
<div style="left:20px;top:345px;width:13px;height:13px"><svg width="13" height="13" viewBox="0 0 13 13"><rect x="0.5" y="0.5" width="12" height="12" fill="#fff" stroke="#333" stroke-width="1"/><polyline points="2.6,6.6 5,9 10.6,3.4" fill="none" stroke="#333" stroke-width="1.4"/></svg></div>
<div class="c" style="left:44px;top:340px;width:94px"><svg class="g"><use href="#g6"/></svg><svg class="g"><use href="#g62"/></svg><svg class="g"><use href="#g12"/></svg><svg class="g"><use href="#g63"/></svg><svg class="g"><use href="#g64"/></svg><svg class="g"><use href="#g65"/></svg></div>
<div class="c" style="left:139px;top:340px;width:41px"><svg class="g"><use href="#g5"/></svg><svg class="g"><use href="#g6"/></svg></div>
<div style="left:20px;top:369px;width:13px;height:13px"><svg width="13" height="13" viewBox="0 0 13 13"><rect x="0.5" y="0.5" width="12" height="12" fill="#fff" stroke="#333" stroke-width="1"/><polyline points="2.6,6.6 5,9 10.6,3.4" fill="none" stroke="#333" stroke-width="1.4"/></svg></div>
<div class="c" style="left:44px;top:364px;width:94px"><svg class="g"><use href="#g6"/></svg><svg class="g"><use href="#g62"/></svg><svg class="g"><use href="#g55"/></svg><svg class="g"><use href="#g66"/></svg><svg class="g"><use href="#g43"/></svg></div>
<div class="c" style="left:139px;top:364px;width:41px"><svg class="g"><use href="#g5"/></svg><svg class="g"><use href="#g6"/></svg></div>
<div style="left:20px;top:393px;width:13px;height:13px"><svg width="13" height="13" viewBox="0 0 13 13"><rect x="0.5" y="0.5" width="12" height="12" fill="#fff" stroke="#333" stroke-width="1"/><polyline points="2.6,6.6 5,9 10.6,3.4" fill="none" stroke="#333" stroke-width="1.4"/></svg></div>
<div class="c" style="left:44px;top:388px;width:94px"><svg class="g"><use href="#g67"/></svg><svg class="g"><use href="#g68"/></svg><svg class="g"><use href="#g69"/></svg><svg class="g"><use href="#g70"/></svg><svg class="g"><use href="#g5"/></svg><svg class="g"><use href="#g6"/></svg><svg class="g"><use href="#g43"/></svg></div>
<div class="c" style="left:139px;top:388px;width:41px"><svg class="g"><use href="#g5"/></svg><svg class="g"><use href="#g6"/></svg></div>
<div style="left:20px;top:417px;width:13px;height:13px"><svg width="13" height="13" viewBox="0 0 13 13"><rect x="0.5" y="0.5" width="12" height="12" fill="#fff" stroke="#333" stroke-width="1"/><polyline points="2.6,6.6 5,9 10.6,3.4" fill="none" stroke="#333" stroke-width="1.4"/></svg></div>
<div class="c" style="left:44px;top:412px;width:94px"><svg class="g"><use href="#g71"/></svg><svg class="g"><use href="#g54"/></svg><svg class="g"><use href="#g5"/></svg><svg class="g"><use href="#g6"/></svg><svg class="g"><use href="#g43"/></svg></div>
<div class="c" style="left:139px;top:412px;width:41px"><svg class="g"><use href="#g5"/></svg><svg class="g"><use href="#g6"/></svg></div>
<div style="left:20px;top:441px;width:13px;height:13px"><svg width="13" height="13" viewBox="0 0 13 13"><rect x="0.5" y="0.5" width="12" height="12" fill="#fff" stroke="#333" stroke-width="1"/><polyline points="2.6,6.6 5,9 10.6,3.4" fill="none" stroke="#333" stroke-width="1.4"/></svg></div>
<div class="c" style="left:44px;top:436px;width:94px"><svg class="g"><use href="#g55"/></svg><svg class="g"><use href="#g56"/></svg><svg class="g"><use href="#g4"/></svg><svg class="g"><use href="#g6"/></svg><svg class="g"><use href="#g43"/></svg></div>
<div class="c" style="left:139px;top:436px;width:41px"><svg class="g"><use href="#g4"/></svg><svg class="g"><use href="#g6"/></svg></div>
<div style="left:20px;top:465px;width:13px;height:13px"><svg width="13" height="13" viewBox="0 0 13 13"><rect x="0.5" y="0.5" width="12" height="12" fill="#fff" stroke="#333" stroke-width="1"/><polyline points="2.6,6.6 5,9 10.6,3.4" fill="none" stroke="#333" stroke-width="1.4"/></svg></div>
<div class="c" style="left:44px;top:460px;width:94px"><svg class="g"><use href="#g50"/></svg><svg class="g"><use href="#g51"/></svg><svg class="g"><use href="#g72"/></svg><svg class="g"><use href="#g53"/></svg><svg class="g"><use href="#g43"/></svg></div>
<div class="c" style="left:139px;top:460px;width:41px"><svg class="g"><use href="#g4"/></svg><svg class="g"><use href="#g6"/></svg></div>
<div style="left:20px;top:489px;width:13px;height:13px"><svg width="13" height="13" viewBox="0 0 13 13"><rect x="0.5" y="0.5" width="12" height="12" fill="#fff" stroke="#333" stroke-width="1"/><polyline points="2.6,6.6 5,9 10.6,3.4" fill="none" stroke="#333" stroke-width="1.4"/></svg></div>
<div class="c" style="left:44px;top:484px;width:94px"><svg class="g"><use href="#g48"/></svg><svg class="g"><use href="#g49"/></svg><svg class="g"><use href="#g4"/></svg><svg class="g"><use href="#g6"/></svg><svg class="g"><use href="#g43"/></svg></div>
<div class="c" style="left:139px;top:484px;width:41px"><svg class="g"><use href="#g4"/></svg><svg class="g"><use href="#g6"/></svg></div>
<div style="left:20px;top:513px;width:13px;height:13px"><svg width="13" height="13" viewBox="0 0 13 13"><rect x="0.5" y="0.5" width="12" height="12" fill="#fff" stroke="#333" stroke-width="1"/><polyline points="2.6,6.6 5,9 10.6,3.4" fill="none" stroke="#333" stroke-width="1.4"/></svg></div>
<div class="c" style="left:44px;top:508px;width:94px"><svg class="g"><use href="#g73"/></svg><svg class="g"><use href="#g21"/></svg><svg class="g"><use href="#g43"/></svg></div>
<div class="c" style="left:139px;top:508px;width:41px"><svg class="g"><use href="#g4"/></svg><svg class="g"><use href="#g6"/></svg></div>
<div style="left:20px;top:537px;width:13px;height:13px"><svg width="13" height="13" viewBox="0 0 13 13"><rect x="0.5" y="0.5" width="12" height="12" fill="#fff" stroke="#333" stroke-width="1"/><polyline points="2.6,6.6 5,9 10.6,3.4" fill="none" stroke="#333" stroke-width="1.4"/></svg></div>
<div class="c" style="left:44px;top:532px;width:94px"><svg class="g"><use href="#g74"/></svg><svg class="g"><use href="#g75"/></svg><svg class="g"><use href="#g21"/></svg><svg class="g"><use href="#g52"/></svg><svg class="g"><use href="#g53"/></svg><svg class="g"><use href="#g43"/></svg></div>
<div class="c" style="left:139px;top:532px;width:41px"><svg class="g"><use href="#g4"/></svg><svg class="g"><use href="#g6"/></svg></div>
<div style="left:20px;top:561px;width:13px;height:13px"><svg width="13" height="13" viewBox="0 0 13 13"><rect x="0.5" y="0.5" width="12" height="12" fill="#fff" stroke="#333" stroke-width="1"/><polyline points="2.6,6.6 5,9 10.6,3.4" fill="none" stroke="#333" stroke-width="1.4"/></svg></div>
<div class="c" style="left:44px;top:556px;width:94px"><svg class="g"><use href="#g50"/></svg><svg class="g"><use href="#g51"/></svg><svg class="g"><use href="#g76"/></svg><svg class="g"><use href="#g53"/></svg><svg class="g"><use href="#g43"/></svg></div>
<div class="c" style="left:139px;top:556px;width:41px"><svg class="g"><use href="#g4"/></svg><svg class="g"><use href="#g6"/></svg></div>
<div style="left:20px;top:585px;width:13px;height:13px"><svg width="13" height="13" viewBox="0 0 13 13"><rect x="0.5" y="0.5" width="12" height="12" fill="#fff" stroke="#333" stroke-width="1"/><polyline points="2.6,6.6 5,9 10.6,3.4" fill="none" stroke="#333" stroke-width="1.4"/></svg></div>
<div class="c" style="left:44px;top:580px;width:94px"><svg class="g"><use href="#g58"/></svg><svg class="g"><use href="#g59"/></svg><svg class="g"><use href="#g77"/></svg><svg class="g"><use href="#g21"/></svg><svg class="g"><use href="#g43"/></svg></div>
<div class="c" style="left:139px;top:580px;width:41px"><svg class="g"><use href="#g4"/></svg><svg class="g"><use href="#g6"/></svg></div>
<div style="left:330px;top:153px;width:18px;height:691px;background:#f0f0f0"></div>
<div style="left:331px;top:171px;width:15px;height:673px;background:#cdcdcd"></div>
<div style="left:333px;top:158px;width:11px;height:8px"><svg width="11" height="8" viewBox="0 0 11 8"><polyline points="1.5,6 5.5,2 9.5,6" fill="none" stroke="#606060" stroke-width="2"/></svg></div>
<div style="left:348px;top:152px;width:2px;height:692px;background:#a8a8a8"></div>
<div style="left:350px;top:152px;width:1295px;height:1px;background:#a8a8a8"></div>
<div style="left:350px;top:153px;width:9px;height:691px;background:#f0f0f0"></div>
<div style="left:360px;top:172px;width:1285px;height:23px;background:#e6e8fa"></div>
<div style="left:360px;top:412px;width:1285px;height:23px;background:#c0dcc0"></div>
<div style="left:360px;top:460px;width:1285px;height:23px;background:#c0dcc0"></div>
<div style="left:360px;top:484px;width:1285px;height:23px;background:#c0dcc0"></div>
<div style="left:360px;top:532px;width:1285px;height:23px;background:#c0dcc0"></div>
<div style="left:360px;top:580px;width:1285px;height:23px;background:#c0dcc0"></div>
<div style="left:360px;top:604px;width:1285px;height:23px;background:#c0dcc0"></div>
<div style="left:360px;top:676px;width:1285px;height:23px;background:#c0dcc0"></div>
<div style="left:350px;top:171px;width:1295px;height:1px;background:#000"></div>
<div style="left:390px;top:153px;width:1px;height:18px;background:#e4e4e4"></div>
<div style="left:390px;top:172px;width:1px;height:672px;background:#c0c0c0"></div>
<div style="left:485px;top:153px;width:1px;height:18px;background:#e4e4e4"></div>
<div style="left:485px;top:172px;width:1px;height:672px;background:#c0c0c0"></div>
<div style="left:566px;top:153px;width:1px;height:18px;background:#e4e4e4"></div>
<div style="left:566px;top:172px;width:1px;height:672px;background:#c0c0c0"></div>
<div style="left:637px;top:153px;width:1px;height:18px;background:#e4e4e4"></div>
<div style="left:637px;top:172px;width:1px;height:672px;background:#c0c0c0"></div>
<div style="left:832px;top:153px;width:1px;height:18px;background:#e4e4e4"></div>
<div style="left:832px;top:172px;width:1px;height:672px;background:#c0c0c0"></div>
<div style="left:883px;top:153px;width:1px;height:18px;background:#e4e4e4"></div>
<div style="left:883px;top:172px;width:1px;height:672px;background:#c0c0c0"></div>
<div style="left:954px;top:153px;width:1px;height:18px;background:#e4e4e4"></div>
<div style="left:954px;top:172px;width:1px;height:672px;background:#c0c0c0"></div>
<div style="left:1082px;top:153px;width:1px;height:18px;background:#e4e4e4"></div>
<div style="left:1082px;top:172px;width:1px;height:672px;background:#c0c0c0"></div>
<div style="left:1247px;top:153px;width:1px;height:18px;background:#e4e4e4"></div>
<div style="left:1247px;top:172px;width:1px;height:672px;background:#c0c0c0"></div>
<div style="left:1378px;top:153px;width:1px;height:18px;background:#e4e4e4"></div>
<div style="left:1378px;top:172px;width:1px;height:672px;background:#c0c0c0"></div>
<div style="left:1509px;top:153px;width:1px;height:18px;background:#e4e4e4"></div>
<div style="left:1509px;top:172px;width:1px;height:672px;background:#c0c0c0"></div>
<div style="left:1570px;top:153px;width:1px;height:18px;background:#e4e4e4"></div>
<div style="left:1570px;top:172px;width:1px;height:672px;background:#c0c0c0"></div>
<div style="left:1631px;top:153px;width:1px;height:18px;background:#e4e4e4"></div>
<div style="left:1631px;top:172px;width:1px;height:672px;background:#c0c0c0"></div>
<div style="left:359px;top:153px;width:1px;height:691px;background:#000"></div>
<div style="left:360px;top:195px;width:1285px;height:1px;background:#3a80c0"></div>
<div style="left:350px;top:195px;width:9px;height:1px;background:#000"></div>
<div style="left:360px;top:219px;width:1285px;height:1px;background:#c0c0c0"></div>
<div style="left:350px;top:219px;width:9px;height:1px;background:#000"></div>
<div style="left:360px;top:243px;width:1285px;height:1px;background:#c0c0c0"></div>
<div style="left:350px;top:243px;width:9px;height:1px;background:#000"></div>
<div style="left:360px;top:267px;width:1285px;height:1px;background:#c0c0c0"></div>
<div style="left:350px;top:267px;width:9px;height:1px;background:#000"></div>
<div style="left:360px;top:291px;width:1285px;height:1px;background:#c0c0c0"></div>
<div style="left:350px;top:291px;width:9px;height:1px;background:#000"></div>
<div style="left:360px;top:315px;width:1285px;height:1px;background:#c0c0c0"></div>
<div style="left:350px;top:315px;width:9px;height:1px;background:#000"></div>
<div style="left:360px;top:339px;width:1285px;height:1px;background:#c0c0c0"></div>
<div style="left:350px;top:339px;width:9px;height:1px;background:#000"></div>
<div style="left:360px;top:363px;width:1285px;height:1px;background:#c0c0c0"></div>
<div style="left:350px;top:363px;width:9px;height:1px;background:#000"></div>
<div style="left:360px;top:387px;width:1285px;height:1px;background:#c0c0c0"></div>
<div style="left:350px;top:387px;width:9px;height:1px;background:#000"></div>
<div style="left:360px;top:411px;width:1285px;height:1px;background:#c0c0c0"></div>
<div style="left:350px;top:411px;width:9px;height:1px;background:#000"></div>
<div style="left:360px;top:435px;width:1285px;height:1px;background:#c0c0c0"></div>
<div style="left:350px;top:435px;width:9px;height:1px;background:#000"></div>
<div style="left:360px;top:459px;width:1285px;height:1px;background:#c0c0c0"></div>
<div style="left:350px;top:459px;width:9px;height:1px;background:#000"></div>
<div style="left:360px;top:483px;width:1285px;height:1px;background:#c0c0c0"></div>
<div style="left:350px;top:483px;width:9px;height:1px;background:#000"></div>
<div style="left:360px;top:507px;width:1285px;height:1px;background:#c0c0c0"></div>
<div style="left:350px;top:507px;width:9px;height:1px;background:#000"></div>
<div style="left:360px;top:531px;width:1285px;height:1px;background:#c0c0c0"></div>
<div style="left:350px;top:531px;width:9px;height:1px;background:#000"></div>
<div style="left:360px;top:555px;width:1285px;height:1px;background:#c0c0c0"></div>
<div style="left:350px;top:555px;width:9px;height:1px;background:#000"></div>
<div style="left:360px;top:579px;width:1285px;height:1px;background:#c0c0c0"></div>
<div style="left:350px;top:579px;width:9px;height:1px;background:#000"></div>
<div style="left:360px;top:603px;width:1285px;height:1px;background:#c0c0c0"></div>
<div style="left:350px;top:603px;width:9px;height:1px;background:#000"></div>
<div style="left:360px;top:627px;width:1285px;height:1px;background:#c0c0c0"></div>
<div style="left:350px;top:627px;width:9px;height:1px;background:#000"></div>
<div style="left:360px;top:651px;width:1285px;height:1px;background:#c0c0c0"></div>
<div style="left:350px;top:651px;width:9px;height:1px;background:#000"></div>
<div style="left:360px;top:675px;width:1285px;height:1px;background:#c0c0c0"></div>
<div style="left:350px;top:675px;width:9px;height:1px;background:#000"></div>
<div style="left:360px;top:699px;width:1285px;height:1px;background:#c0c0c0"></div>
<div style="left:350px;top:699px;width:9px;height:1px;background:#000"></div>
<div style="left:360px;top:723px;width:1285px;height:1px;background:#c0c0c0"></div>
<div style="left:350px;top:723px;width:9px;height:1px;background:#000"></div>
<div style="left:360px;top:747px;width:1285px;height:1px;background:#c0c0c0"></div>
<div style="left:350px;top:747px;width:9px;height:1px;background:#000"></div>
<div style="left:360px;top:771px;width:1285px;height:1px;background:#c0c0c0"></div>
<div style="left:350px;top:771px;width:9px;height:1px;background:#000"></div>
<div style="left:360px;top:795px;width:1285px;height:1px;background:#c0c0c0"></div>
<div style="left:350px;top:795px;width:9px;height:1px;background:#000"></div>
<div style="left:360px;top:819px;width:1285px;height:1px;background:#c0c0c0"></div>
<div style="left:350px;top:819px;width:9px;height:1px;background:#000"></div>
<div style="left:360px;top:843px;width:1285px;height:1px;background:#c0c0c0"></div>
<div style="left:350px;top:843px;width:9px;height:1px;background:#000"></div>
<div style="left:354px;top:182px;width:5px;height:8px"><svg width="5" height="8" viewBox="0 0 5 8"><path d="M0 0L5 4L0 8Z" fill="#000"/></svg></div>
<div class="h" style="left:360px;top:153px;width:30px;height:18px"><svg class="g"><use href="#g78"/></svg><svg class="g"><use href="#g79"/></svg></div>
<div class="h" style="left:391px;top:153px;width:94px;height:18px"><svg class="g"><use href="#g43"/></svg><svg class="g"><use href="#g44"/></svg><svg class="g"><use href="#g18"/></svg><svg class="g"><use href="#g45"/></svg></div>
<div class="h" style="left:486px;top:153px;width:80px;height:18px"><svg class="g"><use href="#g43"/></svg><svg class="g"><use href="#g44"/></svg><svg class="g"><use href="#g80"/></svg><svg class="g"><use href="#g79"/></svg></div>
<div class="h" style="left:567px;top:153px;width:70px;height:18px"><svg class="g"><use href="#g43"/></svg><svg class="g"><use href="#g44"/></svg><svg class="g"><use href="#g11"/></svg><svg class="g"><use href="#g12"/></svg></div>
<div class="h" style="left:638px;top:153px;width:194px;height:18px"><svg class="g"><use href="#g43"/></svg><svg class="g"><use href="#g81"/></svg><svg class="g"><use href="#g82"/></svg><svg class="g"><use href="#g83"/></svg></div>
<div class="h" style="left:833px;top:153px;width:50px;height:18px"><svg class="g"><use href="#g84"/></svg><svg class="g"><use href="#g85"/></svg><svg class="g"><use href="#g86"/></svg></div>
<div class="h" style="left:884px;top:153px;width:70px;height:18px"><svg class="g"><use href="#g20"/></svg><svg class="g"><use href="#g21"/></svg><svg class="g"><use href="#g80"/></svg><svg class="g"><use href="#g79"/></svg></div>
<div class="h" style="left:955px;top:153px;width:127px;height:18px"><svg class="g"><use href="#g20"/></svg><svg class="g"><use href="#g21"/></svg><svg class="g"><use href="#g82"/></svg><svg class="g"><use href="#g83"/></svg></div>
<div class="h" style="left:1083px;top:153px;width:164px;height:18px"><svg class="g"><use href="#g20"/></svg><svg class="g"><use href="#g21"/></svg><svg class="g"><use href="#g87"/></svg><svg class="g"><use href="#g88"/></svg></div>
<div class="h" style="left:1248px;top:153px;width:130px;height:18px"><svg class="g"><use href="#g43"/></svg><svg class="g"><use href="#g81"/></svg></div>
<div class="h" style="left:1379px;top:153px;width:130px;height:18px"><svg class="g"><use href="#g14"/></svg><svg class="g"><use href="#g6"/></svg></div>
<div class="h" style="left:1510px;top:153px;width:60px;height:18px"><svg class="g"><use href="#g5"/></svg><svg class="g"><use href="#g6"/></svg><svg class="g"><use href="#g89"/></svg><svg class="g"><use href="#g90"/></svg></div>
<div class="h" style="left:1571px;top:153px;width:60px;height:18px"><svg class="g"><use href="#g4"/></svg><svg class="g"><use href="#g6"/></svg><svg class="g"><use href="#g89"/></svg><svg class="g"><use href="#g90"/></svg></div>
<div class="h" style="left:1632px;top:153px;width:68px;height:18px"><svg class="g"><use href="#g24"/></svg><svg class="g"><use href="#g25"/></svg></div>
<div class="c" style="left:360px;top:172px;width:30px">1</div>
<div class="c" style="left:391px;top:172px;width:94px"><svg class="g"><use href="#g50"/></svg><svg class="g"><use href="#g51"/></svg><svg class="g"><use href="#g72"/></svg><svg class="g"><use href="#g53"/></svg><svg class="g"><use href="#g43"/></svg></div>
<div class="c" style="left:486px;top:172px;width:80px"><b class="u">XBH</b>230429001</div>
<div class="c" style="left:567px;top:172px;width:70px">2023-04-29</div>
<div class="c" style="left:638px;top:172px;width:194px"><svg class="g"><use href="#g91"/></svg><svg class="g"><use href="#g92"/></svg><svg class="g"><use href="#g93"/></svg><svg class="g"><use href="#g94"/></svg><svg class="g"><use href="#g95"/></svg><svg class="g"><use href="#g96"/></svg><svg class="g"><use href="#g97"/></svg><svg class="g"><use href="#g96"/></svg><svg class="g"><use href="#g98"/></svg><svg class="g"><use href="#g99"/></svg><svg class="g"><use href="#g100"/></svg><svg class="g"><use href="#g101"/></svg><svg class="g"><use href="#g102"/></svg><svg class="g"><use href="#g103"/></svg></div>
<div class="c" style="left:833px;top:172px;width:50px"><svg class="g"><use href="#g104"/></svg><svg class="g"><use href="#g70"/></svg></div>
<div class="c" style="left:884px;top:172px;width:70px"><b class="u">C</b>0222006</div>
<div class="c" style="left:955px;top:172px;width:127px"><b class="u">UPS</b><svg class="g"><use href="#g105"/></svg><svg class="g"><use href="#g106"/></svg><svg class="g"><use href="#g107"/></svg><svg class="g"><use href="#g108"/></svg><svg class="g"><use href="#g109"/></svg></div>
<div class="c" style="left:1083px;top:172px;width:164px">10<b class="u">KVA</b> 3/1 30min<svg class="g"><use href="#g110"/></svg><svg class="g"><use href="#g111"/></svg><svg class="g"><use href="#g112"/></svg> <b class="u">HR</b>3500<svg class="g"><use href="#g113"/></svg></div>
<div class="c" style="left:1248px;top:172px;width:130px"><svg class="g"><use href="#g114"/></svg></div>
<div class="c" style="left:1379px;top:172px;width:130px"><svg class="g"><use href="#g71"/></svg><svg class="g"><use href="#g54"/></svg><svg class="g"><use href="#g14"/></svg></div>
<div class="c" style="left:1571px;top:172px;width:60px">1</div>
<div class="c" style="left:1632px;top:172px;width:68px">2</div>
<div class="c" style="left:360px;top:196px;width:30px">2</div>
<div class="c" style="left:391px;top:196px;width:94px"><svg class="g"><use href="#g50"/></svg><svg class="g"><use href="#g51"/></svg><svg class="g"><use href="#g52"/></svg><svg class="g"><use href="#g53"/></svg><svg class="g"><use href="#g43"/></svg></div>
<div class="c" style="left:486px;top:196px;width:80px"><b class="u">KTR</b>230429001</div>
<div class="c" style="left:567px;top:196px;width:70px">2023-04-29</div>
<div class="c" style="left:638px;top:196px;width:194px"><svg class="g"><use href="#g91"/></svg><svg class="g"><use href="#g92"/></svg><svg class="g"><use href="#g93"/></svg><svg class="g"><use href="#g94"/></svg><svg class="g"><use href="#g95"/></svg><svg class="g"><use href="#g96"/></svg><svg class="g"><use href="#g97"/></svg><svg class="g"><use href="#g96"/></svg><svg class="g"><use href="#g98"/></svg><svg class="g"><use href="#g99"/></svg><svg class="g"><use href="#g100"/></svg><svg class="g"><use href="#g101"/></svg><svg class="g"><use href="#g102"/></svg><svg class="g"><use href="#g103"/></svg></div>
<div class="c" style="left:833px;top:196px;width:50px"><svg class="g"><use href="#g104"/></svg><svg class="g"><use href="#g70"/></svg></div>
<div class="c" style="left:884px;top:196px;width:70px"><b class="u">C</b>0222006</div>
<div class="c" style="left:955px;top:196px;width:127px"><b class="u">UPS</b><svg class="g"><use href="#g105"/></svg><svg class="g"><use href="#g106"/></svg><svg class="g"><use href="#g107"/></svg><svg class="g"><use href="#g108"/></svg><svg class="g"><use href="#g109"/></svg></div>
<div class="c" style="left:1083px;top:196px;width:164px">10<b class="u">KVA</b> 3/1 30min<svg class="g"><use href="#g110"/></svg><svg class="g"><use href="#g111"/></svg><svg class="g"><use href="#g112"/></svg> <b class="u">HR</b>3500<svg class="g"><use href="#g113"/></svg></div>
<div class="c" style="left:1248px;top:196px;width:130px"><svg class="g"><use href="#g114"/></svg></div>
<div class="c" style="left:1379px;top:196px;width:130px"><svg class="g"><use href="#g71"/></svg><svg class="g"><use href="#g54"/></svg><svg class="g"><use href="#g14"/></svg></div>
<div class="c" style="left:1510px;top:196px;width:60px">1</div>
<div class="c" style="left:1632px;top:196px;width:68px">2</div>
<div class="c" style="left:360px;top:220px;width:30px">3</div>
<div class="c" style="left:391px;top:220px;width:94px"><svg class="g"><use href="#g6"/></svg><svg class="g"><use href="#g62"/></svg><svg class="g"><use href="#g55"/></svg><svg class="g"><use href="#g66"/></svg><svg class="g"><use href="#g43"/></svg></div>
<div class="c" style="left:486px;top:220px;width:80px"><b class="u">KTZ</b>230306001</div>
<div class="c" style="left:567px;top:220px;width:70px">2023-03-06</div>
<div class="c" style="left:638px;top:220px;width:194px"><svg class="g"><use href="#g30"/></svg><svg class="g"><use href="#g115"/></svg><svg class="g"><use href="#g116"/></svg><svg class="g"><use href="#g115"/></svg><svg class="g"><use href="#g108"/></svg><svg class="g"><use href="#g117"/></svg><svg class="g"><use href="#g118"/></svg><svg class="g"><use href="#g119"/></svg><svg class="g"><use href="#g98"/></svg><svg class="g"><use href="#g99"/></svg><svg class="g"><use href="#g102"/></svg><svg class="g"><use href="#g103"/></svg></div>
<div class="c" style="left:833px;top:220px;width:50px">admin</div>
<div class="c" style="left:884px;top:220px;width:70px"><b class="u">DA</b>12022010</div>
<div class="c" style="left:955px;top:220px;width:127px"><svg class="g"><use href="#g120"/></svg><svg class="g"><use href="#g59"/></svg><svg class="g"><use href="#g121"/></svg><svg class="g"><use href="#g122"/></svg><svg class="g"><use href="#g108"/></svg><svg class="g"><use href="#g123"/></svg><svg class="g"><use href="#g124"/></svg><svg class="g"><use href="#g125"/></svg></div>
<div class="c" style="left:1083px;top:220px;width:164px">1200<b class="u">AH</b></div>
<div class="c" style="left:1248px;top:220px;width:130px"><svg class="g"><use href="#g126"/></svg></div>
<div class="c" style="left:1379px;top:220px;width:130px"><svg class="g"><use href="#g127"/></svg><svg class="g"><use href="#g128"/></svg><svg class="g"><use href="#g74"/></svg><svg class="g"><use href="#g75"/></svg><svg class="g"><use href="#g21"/></svg><svg class="g"><use href="#g14"/></svg></div>
<div class="c" style="left:1510px;top:220px;width:60px">1</div>
<div class="c" style="left:360px;top:244px;width:30px">4</div>
<div class="c" style="left:391px;top:244px;width:94px"><svg class="g"><use href="#g6"/></svg><svg class="g"><use href="#g62"/></svg><svg class="g"><use href="#g55"/></svg><svg class="g"><use href="#g66"/></svg><svg class="g"><use href="#g43"/></svg></div>
<div class="c" style="left:486px;top:244px;width:80px"><b class="u">KTZ</b>230306002</div>
<div class="c" style="left:567px;top:244px;width:70px">2023-03-06</div>
<div class="c" style="left:638px;top:244px;width:194px"><svg class="g"><use href="#g30"/></svg><svg class="g"><use href="#g115"/></svg><svg class="g"><use href="#g116"/></svg><svg class="g"><use href="#g115"/></svg><svg class="g"><use href="#g108"/></svg><svg class="g"><use href="#g117"/></svg><svg class="g"><use href="#g118"/></svg><svg class="g"><use href="#g119"/></svg><svg class="g"><use href="#g98"/></svg><svg class="g"><use href="#g99"/></svg><svg class="g"><use href="#g102"/></svg><svg class="g"><use href="#g103"/></svg></div>
<div class="c" style="left:833px;top:244px;width:50px">admin</div>
<div class="c" style="left:884px;top:244px;width:70px"><b class="u">DA</b>12022011</div>
<div class="c" style="left:955px;top:244px;width:127px"><svg class="g"><use href="#g120"/></svg><svg class="g"><use href="#g59"/></svg><svg class="g"><use href="#g121"/></svg><svg class="g"><use href="#g122"/></svg><svg class="g"><use href="#g108"/></svg><svg class="g"><use href="#g123"/></svg><svg class="g"><use href="#g124"/></svg><svg class="g"><use href="#g125"/></svg></div>
<div class="c" style="left:1083px;top:244px;width:164px">1500<b class="u">AH</b></div>
<div class="c" style="left:1248px;top:244px;width:130px"><svg class="g"><use href="#g126"/></svg></div>
<div class="c" style="left:1379px;top:244px;width:130px"><svg class="g"><use href="#g127"/></svg><svg class="g"><use href="#g128"/></svg><svg class="g"><use href="#g74"/></svg><svg class="g"><use href="#g75"/></svg><svg class="g"><use href="#g21"/></svg><svg class="g"><use href="#g14"/></svg></div>
<div class="c" style="left:1510px;top:244px;width:60px">1</div>
<div class="c" style="left:360px;top:268px;width:30px">5</div>
<div class="c" style="left:391px;top:268px;width:94px"><svg class="g"><use href="#g6"/></svg><svg class="g"><use href="#g62"/></svg><svg class="g"><use href="#g55"/></svg><svg class="g"><use href="#g66"/></svg><svg class="g"><use href="#g43"/></svg></div>
<div class="c" style="left:486px;top:268px;width:80px"><b class="u">KTZ</b>230306003</div>
<div class="c" style="left:567px;top:268px;width:70px">2023-03-06</div>
<div class="c" style="left:638px;top:268px;width:194px"><svg class="g"><use href="#g30"/></svg><svg class="g"><use href="#g115"/></svg><svg class="g"><use href="#g116"/></svg><svg class="g"><use href="#g115"/></svg><svg class="g"><use href="#g108"/></svg><svg class="g"><use href="#g117"/></svg><svg class="g"><use href="#g118"/></svg><svg class="g"><use href="#g119"/></svg><svg class="g"><use href="#g98"/></svg><svg class="g"><use href="#g99"/></svg><svg class="g"><use href="#g102"/></svg><svg class="g"><use href="#g103"/></svg></div>
<div class="c" style="left:833px;top:268px;width:50px">admin</div>
<div class="c" style="left:884px;top:268px;width:70px"><b class="u">DA</b>12022012</div>
<div class="c" style="left:955px;top:268px;width:127px"><svg class="g"><use href="#g120"/></svg><svg class="g"><use href="#g59"/></svg><svg class="g"><use href="#g121"/></svg><svg class="g"><use href="#g122"/></svg><svg class="g"><use href="#g108"/></svg><svg class="g"><use href="#g123"/></svg><svg class="g"><use href="#g124"/></svg><svg class="g"><use href="#g125"/></svg></div>
<div class="c" style="left:1083px;top:268px;width:164px">2000<b class="u">AH</b></div>
<div class="c" style="left:1248px;top:268px;width:130px"><svg class="g"><use href="#g126"/></svg></div>
<div class="c" style="left:1379px;top:268px;width:130px"><svg class="g"><use href="#g127"/></svg><svg class="g"><use href="#g128"/></svg><svg class="g"><use href="#g74"/></svg><svg class="g"><use href="#g75"/></svg><svg class="g"><use href="#g21"/></svg><svg class="g"><use href="#g14"/></svg></div>
<div class="c" style="left:1510px;top:268px;width:60px">1</div>
<div class="c" style="left:360px;top:292px;width:30px">6</div>
<div class="c" style="left:391px;top:292px;width:94px"><svg class="g"><use href="#g6"/></svg><svg class="g"><use href="#g62"/></svg><svg class="g"><use href="#g55"/></svg><svg class="g"><use href="#g66"/></svg><svg class="g"><use href="#g43"/></svg></div>
<div class="c" style="left:486px;top:292px;width:80px"><b class="u">KTZ</b>230306004</div>
<div class="c" style="left:567px;top:292px;width:70px">2023-03-06</div>
<div class="c" style="left:638px;top:292px;width:194px"><svg class="g"><use href="#g30"/></svg><svg class="g"><use href="#g115"/></svg><svg class="g"><use href="#g116"/></svg><svg class="g"><use href="#g115"/></svg><svg class="g"><use href="#g108"/></svg><svg class="g"><use href="#g117"/></svg><svg class="g"><use href="#g118"/></svg><svg class="g"><use href="#g119"/></svg><svg class="g"><use href="#g98"/></svg><svg class="g"><use href="#g99"/></svg><svg class="g"><use href="#g102"/></svg><svg class="g"><use href="#g103"/></svg></div>
<div class="c" style="left:833px;top:292px;width:50px">admin</div>
<div class="c" style="left:884px;top:292px;width:70px"><b class="u">DA</b>12022013</div>
<div class="c" style="left:955px;top:292px;width:127px"><svg class="g"><use href="#g120"/></svg><svg class="g"><use href="#g59"/></svg><svg class="g"><use href="#g121"/></svg><svg class="g"><use href="#g122"/></svg><svg class="g"><use href="#g108"/></svg><svg class="g"><use href="#g123"/></svg><svg class="g"><use href="#g124"/></svg><svg class="g"><use href="#g125"/></svg></div>
<div class="c" style="left:1083px;top:292px;width:164px">2500<b class="u">AH</b></div>
<div class="c" style="left:1248px;top:292px;width:130px"><svg class="g"><use href="#g126"/></svg></div>
<div class="c" style="left:1379px;top:292px;width:130px"><svg class="g"><use href="#g127"/></svg><svg class="g"><use href="#g128"/></svg><svg class="g"><use href="#g74"/></svg><svg class="g"><use href="#g75"/></svg><svg class="g"><use href="#g21"/></svg><svg class="g"><use href="#g14"/></svg></div>
<div class="c" style="left:1510px;top:292px;width:60px">1</div>
<div class="c" style="left:360px;top:316px;width:30px">7</div>
<div class="c" style="left:391px;top:316px;width:94px"><svg class="g"><use href="#g6"/></svg><svg class="g"><use href="#g62"/></svg><svg class="g"><use href="#g55"/></svg><svg class="g"><use href="#g66"/></svg><svg class="g"><use href="#g43"/></svg></div>
<div class="c" style="left:486px;top:316px;width:80px"><b class="u">KTZ</b>230306005</div>
<div class="c" style="left:567px;top:316px;width:70px">2023-03-06</div>
<div class="c" style="left:638px;top:316px;width:194px"><svg class="g"><use href="#g30"/></svg><svg class="g"><use href="#g115"/></svg><svg class="g"><use href="#g116"/></svg><svg class="g"><use href="#g115"/></svg><svg class="g"><use href="#g108"/></svg><svg class="g"><use href="#g117"/></svg><svg class="g"><use href="#g118"/></svg><svg class="g"><use href="#g119"/></svg><svg class="g"><use href="#g98"/></svg><svg class="g"><use href="#g99"/></svg><svg class="g"><use href="#g102"/></svg><svg class="g"><use href="#g103"/></svg></div>
<div class="c" style="left:833px;top:316px;width:50px">admin</div>
<div class="c" style="left:884px;top:316px;width:70px"><b class="u">DA</b>12022014</div>
<div class="c" style="left:955px;top:316px;width:127px"><svg class="g"><use href="#g120"/></svg><svg class="g"><use href="#g59"/></svg><svg class="g"><use href="#g121"/></svg><svg class="g"><use href="#g122"/></svg><svg class="g"><use href="#g108"/></svg><svg class="g"><use href="#g123"/></svg><svg class="g"><use href="#g124"/></svg><svg class="g"><use href="#g125"/></svg></div>
<div class="c" style="left:1083px;top:316px;width:164px">3000<b class="u">AH</b></div>
<div class="c" style="left:1248px;top:316px;width:130px"><svg class="g"><use href="#g126"/></svg></div>
<div class="c" style="left:1379px;top:316px;width:130px"><svg class="g"><use href="#g127"/></svg><svg class="g"><use href="#g128"/></svg><svg class="g"><use href="#g74"/></svg><svg class="g"><use href="#g75"/></svg><svg class="g"><use href="#g21"/></svg><svg class="g"><use href="#g14"/></svg></div>
<div class="c" style="left:1510px;top:316px;width:60px">1</div>
<div class="c" style="left:360px;top:340px;width:30px">8</div>
<div class="c" style="left:391px;top:340px;width:94px"><svg class="g"><use href="#g6"/></svg><svg class="g"><use href="#g62"/></svg><svg class="g"><use href="#g55"/></svg><svg class="g"><use href="#g66"/></svg><svg class="g"><use href="#g43"/></svg></div>
<div class="c" style="left:486px;top:340px;width:80px"><b class="u">KTZ</b>230306006</div>
<div class="c" style="left:567px;top:340px;width:70px">2023-03-06</div>
<div class="c" style="left:638px;top:340px;width:194px"><svg class="g"><use href="#g30"/></svg><svg class="g"><use href="#g115"/></svg><svg class="g"><use href="#g116"/></svg><svg class="g"><use href="#g115"/></svg><svg class="g"><use href="#g108"/></svg><svg class="g"><use href="#g117"/></svg><svg class="g"><use href="#g118"/></svg><svg class="g"><use href="#g119"/></svg><svg class="g"><use href="#g98"/></svg><svg class="g"><use href="#g99"/></svg><svg class="g"><use href="#g102"/></svg><svg class="g"><use href="#g103"/></svg></div>
<div class="c" style="left:833px;top:340px;width:50px">admin</div>
<div class="c" style="left:884px;top:340px;width:70px"><b class="u">DA</b>12022015</div>
<div class="c" style="left:955px;top:340px;width:127px"><svg class="g"><use href="#g120"/></svg><svg class="g"><use href="#g59"/></svg><svg class="g"><use href="#g121"/></svg><svg class="g"><use href="#g122"/></svg><svg class="g"><use href="#g108"/></svg><svg class="g"><use href="#g123"/></svg><svg class="g"><use href="#g124"/></svg><svg class="g"><use href="#g125"/></svg></div>
<div class="c" style="left:1083px;top:340px;width:164px"><b class="u">VR</b> <b class="u">L</b>2-1200</div>
<div class="c" style="left:1248px;top:340px;width:130px"><svg class="g"><use href="#g126"/></svg></div>
<div class="c" style="left:1379px;top:340px;width:130px"><svg class="g"><use href="#g127"/></svg><svg class="g"><use href="#g128"/></svg><svg class="g"><use href="#g74"/></svg><svg class="g"><use href="#g75"/></svg><svg class="g"><use href="#g21"/></svg><svg class="g"><use href="#g14"/></svg></div>
<div class="c" style="left:1510px;top:340px;width:60px">1</div>
<div class="c" style="left:360px;top:364px;width:30px">9</div>
<div class="c" style="left:391px;top:364px;width:94px"><svg class="g"><use href="#g6"/></svg><svg class="g"><use href="#g62"/></svg><svg class="g"><use href="#g55"/></svg><svg class="g"><use href="#g66"/></svg><svg class="g"><use href="#g43"/></svg></div>
<div class="c" style="left:486px;top:364px;width:80px"><b class="u">KTZ</b>230306007</div>
<div class="c" style="left:567px;top:364px;width:70px">2023-03-06</div>
<div class="c" style="left:638px;top:364px;width:194px"><svg class="g"><use href="#g30"/></svg><svg class="g"><use href="#g115"/></svg><svg class="g"><use href="#g116"/></svg><svg class="g"><use href="#g115"/></svg><svg class="g"><use href="#g108"/></svg><svg class="g"><use href="#g117"/></svg><svg class="g"><use href="#g118"/></svg><svg class="g"><use href="#g119"/></svg><svg class="g"><use href="#g98"/></svg><svg class="g"><use href="#g99"/></svg><svg class="g"><use href="#g102"/></svg><svg class="g"><use href="#g103"/></svg></div>
<div class="c" style="left:833px;top:364px;width:50px">admin</div>
<div class="c" style="left:884px;top:364px;width:70px"><b class="u">DA</b>12022016</div>
<div class="c" style="left:955px;top:364px;width:127px">test99</div>
<div class="c" style="left:1248px;top:364px;width:130px"><svg class="g"><use href="#g129"/></svg></div>
<div class="c" style="left:1379px;top:364px;width:130px"><svg class="g"><use href="#g127"/></svg><svg class="g"><use href="#g128"/></svg><svg class="g"><use href="#g74"/></svg><svg class="g"><use href="#g75"/></svg><svg class="g"><use href="#g21"/></svg><svg class="g"><use href="#g14"/></svg></div>
<div class="c" style="left:1510px;top:364px;width:60px">1</div>
<div class="c" style="left:360px;top:388px;width:30px">10</div>
<div class="c" style="left:391px;top:388px;width:94px"><svg class="g"><use href="#g6"/></svg><svg class="g"><use href="#g62"/></svg><svg class="g"><use href="#g55"/></svg><svg class="g"><use href="#g66"/></svg><svg class="g"><use href="#g43"/></svg></div>
<div class="c" style="left:486px;top:388px;width:80px"><b class="u">KTZ</b>230306008</div>
<div class="c" style="left:567px;top:388px;width:70px">2023-03-06</div>
<div class="c" style="left:638px;top:388px;width:194px"><svg class="g"><use href="#g30"/></svg><svg class="g"><use href="#g115"/></svg><svg class="g"><use href="#g116"/></svg><svg class="g"><use href="#g115"/></svg><svg class="g"><use href="#g108"/></svg><svg class="g"><use href="#g117"/></svg><svg class="g"><use href="#g118"/></svg><svg class="g"><use href="#g119"/></svg><svg class="g"><use href="#g98"/></svg><svg class="g"><use href="#g99"/></svg><svg class="g"><use href="#g102"/></svg><svg class="g"><use href="#g103"/></svg></div>
<div class="c" style="left:833px;top:388px;width:50px">admin</div>
<div class="c" style="left:884px;top:388px;width:70px"><b class="u">DA</b>12022016</div>
<div class="c" style="left:955px;top:388px;width:127px">test99</div>
<div class="c" style="left:1248px;top:388px;width:130px"><svg class="g"><use href="#g129"/></svg></div>
<div class="c" style="left:1379px;top:388px;width:130px"><svg class="g"><use href="#g127"/></svg><svg class="g"><use href="#g128"/></svg><svg class="g"><use href="#g74"/></svg><svg class="g"><use href="#g75"/></svg><svg class="g"><use href="#g21"/></svg><svg class="g"><use href="#g14"/></svg></div>
<div class="c" style="left:1510px;top:388px;width:60px">1</div>
<div class="c" style="left:360px;top:412px;width:30px">11</div>
<div class="c" style="left:391px;top:412px;width:94px"><svg class="g"><use href="#g73"/></svg><svg class="g"><use href="#g21"/></svg><svg class="g"><use href="#g43"/></svg></div>
<div class="c" style="left:486px;top:412px;width:80px"><b class="u">JLD</b>230305001</div>
<div class="c" style="left:567px;top:412px;width:70px">2023-03-05</div>
<div class="c" style="left:638px;top:412px;width:194px"><b class="u">BE</b></div>
<div class="c" style="left:833px;top:412px;width:50px">admin</div>
<div class="c" style="left:884px;top:412px;width:70px"><b class="u">DA</b>12022016</div>
<div class="c" style="left:955px;top:412px;width:127px">test99</div>
<div class="c" style="left:1248px;top:412px;width:130px"><svg class="g"><use href="#g129"/></svg></div>
<div class="c" style="left:1379px;top:412px;width:130px"><svg class="g"><use href="#g127"/></svg><svg class="g"><use href="#g128"/></svg><svg class="g"><use href="#g74"/></svg><svg class="g"><use href="#g75"/></svg><svg class="g"><use href="#g21"/></svg><svg class="g"><use href="#g14"/></svg></div>
<div class="c" style="left:1571px;top:412px;width:60px">1</div>
<div class="c" style="left:360px;top:436px;width:30px">12</div>
<div class="c" style="left:391px;top:436px;width:94px"><svg class="g"><use href="#g6"/></svg><svg class="g"><use href="#g62"/></svg><svg class="g"><use href="#g12"/></svg><svg class="g"><use href="#g63"/></svg><svg class="g"><use href="#g64"/></svg><svg class="g"><use href="#g65"/></svg></div>
<div class="c" style="left:486px;top:436px;width:80px"><b class="u">KQY</b>230304001</div>
<div class="c" style="left:567px;top:436px;width:70px">2023-03-04</div>
<div class="c" style="left:884px;top:436px;width:70px"><b class="u">DA</b>12022016</div>
<div class="c" style="left:955px;top:436px;width:127px">test99</div>
<div class="c" style="left:1248px;top:436px;width:130px"><svg class="g"><use href="#g129"/></svg></div>
<div class="c" style="left:1379px;top:436px;width:130px"><svg class="g"><use href="#g127"/></svg><svg class="g"><use href="#g128"/></svg><svg class="g"><use href="#g74"/></svg><svg class="g"><use href="#g75"/></svg><svg class="g"><use href="#g21"/></svg><svg class="g"><use href="#g14"/></svg></div>
<div class="c" style="left:1510px;top:436px;width:60px">3750</div>
<div class="c" style="left:360px;top:460px;width:30px">13</div>
<div class="c" style="left:391px;top:460px;width:94px"><svg class="g"><use href="#g58"/></svg><svg class="g"><use href="#g59"/></svg><svg class="g"><use href="#g77"/></svg><svg class="g"><use href="#g21"/></svg><svg class="g"><use href="#g43"/></svg></div>
<div class="c" style="left:486px;top:460px;width:80px"><b class="u">SLD</b>230226001</div>
<div class="c" style="left:567px;top:460px;width:70px">2023-02-26</div>
<div class="c" style="left:638px;top:460px;width:194px"><svg class="g"><use href="#g30"/></svg><svg class="g"><use href="#g115"/></svg><svg class="g"><use href="#g116"/></svg><svg class="g"><use href="#g115"/></svg><svg class="g"><use href="#g108"/></svg><svg class="g"><use href="#g117"/></svg><svg class="g"><use href="#g118"/></svg><svg class="g"><use href="#g119"/></svg><svg class="g"><use href="#g98"/></svg><svg class="g"><use href="#g99"/></svg><svg class="g"><use href="#g102"/></svg><svg class="g"><use href="#g103"/></svg></div>
<div class="c" style="left:833px;top:460px;width:50px">admin</div>
<div class="c" style="left:884px;top:460px;width:70px"><b class="u">A</b>200002</div>
<div class="c" style="left:955px;top:460px;width:127px"><svg class="g"><use href="#g130"/></svg><svg class="g"><use href="#g7"/></svg><svg class="g"><use href="#g131"/></svg><svg class="g"><use href="#g132"/></svg><svg class="g"><use href="#g133"/></svg>2</div>
<div class="c" style="left:1083px;top:460px;width:164px"><b class="u">HYKGD</b>2-<b class="u">A</b></div>
<div class="c" style="left:1248px;top:460px;width:130px"><svg class="g"><use href="#g134"/></svg></div>
<div class="c" style="left:1379px;top:460px;width:130px"><svg class="g"><use href="#g71"/></svg><svg class="g"><use href="#g54"/></svg><svg class="g"><use href="#g14"/></svg></div>
<div class="c" style="left:1571px;top:460px;width:60px">1</div>
<div class="c" style="left:360px;top:484px;width:30px">14</div>
<div class="c" style="left:391px;top:484px;width:94px"><svg class="g"><use href="#g48"/></svg><svg class="g"><use href="#g49"/></svg><svg class="g"><use href="#g4"/></svg><svg class="g"><use href="#g6"/></svg><svg class="g"><use href="#g43"/></svg></div>
<div class="c" style="left:486px;top:484px;width:80px"><b class="u">QCD</b>230226001</div>
<div class="c" style="left:567px;top:484px;width:70px">2023-02-26</div>
<div class="c" style="left:638px;top:484px;width:194px"><svg class="g"><use href="#g30"/></svg><svg class="g"><use href="#g115"/></svg><svg class="g"><use href="#g116"/></svg><svg class="g"><use href="#g115"/></svg><svg class="g"><use href="#g108"/></svg><svg class="g"><use href="#g117"/></svg><svg class="g"><use href="#g118"/></svg><svg class="g"><use href="#g119"/></svg><svg class="g"><use href="#g98"/></svg><svg class="g"><use href="#g99"/></svg><svg class="g"><use href="#g102"/></svg><svg class="g"><use href="#g103"/></svg></div>
<div class="c" style="left:833px;top:484px;width:50px">admin</div>
<div class="c" style="left:884px;top:484px;width:70px"><b class="u">A</b>200002</div>
<div class="c" style="left:955px;top:484px;width:127px"><svg class="g"><use href="#g130"/></svg><svg class="g"><use href="#g7"/></svg><svg class="g"><use href="#g131"/></svg><svg class="g"><use href="#g132"/></svg><svg class="g"><use href="#g133"/></svg>2</div>
<div class="c" style="left:1083px;top:484px;width:164px"><b class="u">HYKGD</b>2-<b class="u">A</b></div>
<div class="c" style="left:1248px;top:484px;width:130px"><svg class="g"><use href="#g134"/></svg></div>
<div class="c" style="left:1379px;top:484px;width:130px"><svg class="g"><use href="#g71"/></svg><svg class="g"><use href="#g54"/></svg><svg class="g"><use href="#g14"/></svg></div>
<div class="c" style="left:1571px;top:484px;width:60px">1</div>
<div class="c" style="left:360px;top:508px;width:30px">15</div>
<div class="c" style="left:391px;top:508px;width:94px"><svg class="g"><use href="#g60"/></svg><svg class="g"><use href="#g61"/></svg><svg class="g"><use href="#g5"/></svg><svg class="g"><use href="#g6"/></svg><svg class="g"><use href="#g43"/></svg></div>
<div class="c" style="left:486px;top:508px;width:80px"><b class="u">CGR</b>230226001</div>
<div class="c" style="left:567px;top:508px;width:70px">2023-02-26</div>
<div class="c" style="left:638px;top:508px;width:194px"><svg class="g"><use href="#g30"/></svg><svg class="g"><use href="#g115"/></svg><svg class="g"><use href="#g30"/></svg><svg class="g"><use href="#g135"/></svg><svg class="g"><use href="#g108"/></svg><svg class="g"><use href="#g136"/></svg><svg class="g"><use href="#g108"/></svg><svg class="g"><use href="#g137"/></svg><svg class="g"><use href="#g98"/></svg><svg class="g"><use href="#g99"/></svg><svg class="g"><use href="#g102"/></svg><svg class="g"><use href="#g103"/></svg></div>
<div class="c" style="left:833px;top:508px;width:50px">admin</div>
<div class="c" style="left:884px;top:508px;width:70px"><b class="u">A</b>200002</div>
<div class="c" style="left:955px;top:508px;width:127px"><svg class="g"><use href="#g130"/></svg><svg class="g"><use href="#g7"/></svg><svg class="g"><use href="#g131"/></svg><svg class="g"><use href="#g132"/></svg><svg class="g"><use href="#g133"/></svg>2</div>
<div class="c" style="left:1083px;top:508px;width:164px"><b class="u">HYKGD</b>2-<b class="u">A</b></div>
<div class="c" style="left:1248px;top:508px;width:130px"><svg class="g"><use href="#g134"/></svg></div>
<div class="c" style="left:1379px;top:508px;width:130px"><svg class="g"><use href="#g71"/></svg><svg class="g"><use href="#g54"/></svg><svg class="g"><use href="#g14"/></svg></div>
<div class="c" style="left:1510px;top:508px;width:60px">5</div>
<div class="c" style="left:360px;top:532px;width:30px">16</div>
<div class="c" style="left:391px;top:532px;width:94px"><svg class="g"><use href="#g48"/></svg><svg class="g"><use href="#g49"/></svg><svg class="g"><use href="#g4"/></svg><svg class="g"><use href="#g6"/></svg><svg class="g"><use href="#g43"/></svg></div>
<div class="c" style="left:486px;top:532px;width:80px"><b class="u">QCD</b>230225001</div>
<div class="c" style="left:567px;top:532px;width:70px">2023-02-25</div>
<div class="c" style="left:638px;top:532px;width:194px"><svg class="g"><use href="#g60"/></svg><svg class="g"><use href="#g61"/></svg><svg class="g"><use href="#g138"/></svg></div>
<div class="c" style="left:833px;top:532px;width:50px">admin</div>
<div class="c" style="left:884px;top:532px;width:70px"><b class="u">A</b>200001</div>
<div class="c" style="left:955px;top:532px;width:127px"><svg class="g"><use href="#g130"/></svg><svg class="g"><use href="#g7"/></svg><svg class="g"><use href="#g131"/></svg><svg class="g"><use href="#g132"/></svg><svg class="g"><use href="#g133"/></svg></div>
<div class="c" style="left:1083px;top:532px;width:164px"><b class="u">HYKGD</b>2-<b class="u">A</b></div>
<div class="c" style="left:1248px;top:532px;width:130px"><svg class="g"><use href="#g134"/></svg></div>
<div class="c" style="left:1379px;top:532px;width:130px"><svg class="g"><use href="#g71"/></svg><svg class="g"><use href="#g54"/></svg><svg class="g"><use href="#g14"/></svg></div>
<div class="c" style="left:1571px;top:532px;width:60px">1</div>
<div class="c" style="left:360px;top:556px;width:30px">17</div>
<div class="c" style="left:391px;top:556px;width:94px"><svg class="g"><use href="#g60"/></svg><svg class="g"><use href="#g61"/></svg><svg class="g"><use href="#g5"/></svg><svg class="g"><use href="#g6"/></svg><svg class="g"><use href="#g43"/></svg></div>
<div class="c" style="left:486px;top:556px;width:80px"><b class="u">CGR</b>230225001</div>
<div class="c" style="left:567px;top:556px;width:70px">2023-02-25</div>
<div class="c" style="left:638px;top:556px;width:194px"><svg class="g"><use href="#g30"/></svg><svg class="g"><use href="#g115"/></svg><svg class="g"><use href="#g30"/></svg><svg class="g"><use href="#g135"/></svg><svg class="g"><use href="#g108"/></svg><svg class="g"><use href="#g136"/></svg><svg class="g"><use href="#g108"/></svg><svg class="g"><use href="#g137"/></svg><svg class="g"><use href="#g98"/></svg><svg class="g"><use href="#g99"/></svg><svg class="g"><use href="#g102"/></svg><svg class="g"><use href="#g103"/></svg></div>
<div class="c" style="left:833px;top:556px;width:50px">admin</div>
<div class="c" style="left:884px;top:556px;width:70px"><b class="u">A</b>200001</div>
<div class="c" style="left:955px;top:556px;width:127px"><svg class="g"><use href="#g130"/></svg><svg class="g"><use href="#g7"/></svg><svg class="g"><use href="#g131"/></svg><svg class="g"><use href="#g132"/></svg><svg class="g"><use href="#g133"/></svg></div>
<div class="c" style="left:1083px;top:556px;width:164px"><b class="u">HYKGD</b>2-<b class="u">A</b></div>
<div class="c" style="left:1248px;top:556px;width:130px"><svg class="g"><use href="#g134"/></svg></div>
<div class="c" style="left:1379px;top:556px;width:130px"><svg class="g"><use href="#g71"/></svg><svg class="g"><use href="#g54"/></svg><svg class="g"><use href="#g14"/></svg></div>
<div class="c" style="left:1510px;top:556px;width:60px">5</div>
<div class="c" style="left:360px;top:580px;width:30px">18</div>
<div class="c" style="left:391px;top:580px;width:94px"><svg class="g"><use href="#g48"/></svg><svg class="g"><use href="#g49"/></svg><svg class="g"><use href="#g4"/></svg><svg class="g"><use href="#g6"/></svg><svg class="g"><use href="#g43"/></svg></div>
<div class="c" style="left:486px;top:580px;width:80px"><b class="u">QCD</b>230222001</div>
<div class="c" style="left:567px;top:580px;width:70px">2023-02-22</div>
<div class="c" style="left:638px;top:580px;width:194px"><svg class="g"><use href="#g132"/></svg><svg class="g"><use href="#g139"/></svg><svg class="g"><use href="#g140"/></svg><svg class="g"><use href="#g141"/></svg></div>
<div class="c" style="left:833px;top:580px;width:50px">admin</div>
<div class="c" style="left:884px;top:580px;width:70px"><b class="u">A</b>200001</div>
<div class="c" style="left:955px;top:580px;width:127px"><svg class="g"><use href="#g130"/></svg><svg class="g"><use href="#g7"/></svg><svg class="g"><use href="#g131"/></svg><svg class="g"><use href="#g132"/></svg><svg class="g"><use href="#g133"/></svg></div>
<div class="c" style="left:1083px;top:580px;width:164px"><b class="u">HYKGD</b>2-<b class="u">A</b></div>
<div class="c" style="left:1248px;top:580px;width:130px"><svg class="g"><use href="#g134"/></svg></div>
<div class="c" style="left:1379px;top:580px;width:130px"><svg class="g"><use href="#g71"/></svg><svg class="g"><use href="#g54"/></svg><svg class="g"><use href="#g14"/></svg></div>
<div class="c" style="left:1571px;top:580px;width:60px">1</div>
<div class="c" style="left:360px;top:604px;width:30px">19</div>
<div class="c" style="left:391px;top:604px;width:94px"><svg class="g"><use href="#g58"/></svg><svg class="g"><use href="#g59"/></svg><svg class="g"><use href="#g77"/></svg><svg class="g"><use href="#g21"/></svg><svg class="g"><use href="#g43"/></svg></div>
<div class="c" style="left:486px;top:604px;width:80px"><b class="u">SLD</b>230219001</div>
<div class="c" style="left:567px;top:604px;width:70px">2023-02-19</div>
<div class="c" style="left:638px;top:604px;width:194px"><svg class="g"><use href="#g30"/></svg><svg class="g"><use href="#g115"/></svg><svg class="g"><use href="#g116"/></svg><svg class="g"><use href="#g115"/></svg><svg class="g"><use href="#g108"/></svg><svg class="g"><use href="#g117"/></svg><svg class="g"><use href="#g118"/></svg><svg class="g"><use href="#g119"/></svg><svg class="g"><use href="#g98"/></svg><svg class="g"><use href="#g99"/></svg><svg class="g"><use href="#g102"/></svg><svg class="g"><use href="#g103"/></svg></div>
<div class="c" style="left:833px;top:604px;width:50px">admin</div>
<div class="c" style="left:884px;top:604px;width:70px"><b class="u">A</b>200001</div>
<div class="c" style="left:955px;top:604px;width:127px"><svg class="g"><use href="#g130"/></svg><svg class="g"><use href="#g7"/></svg><svg class="g"><use href="#g131"/></svg><svg class="g"><use href="#g132"/></svg><svg class="g"><use href="#g133"/></svg></div>
<div class="c" style="left:1083px;top:604px;width:164px"><b class="u">HYKGD</b>2-<b class="u">A</b></div>
<div class="c" style="left:1248px;top:604px;width:130px"><svg class="g"><use href="#g134"/></svg></div>
<div class="c" style="left:1379px;top:604px;width:130px"><svg class="g"><use href="#g71"/></svg><svg class="g"><use href="#g54"/></svg><svg class="g"><use href="#g14"/></svg></div>
<div class="c" style="left:1571px;top:604px;width:60px">1</div>
<div class="c" style="left:360px;top:628px;width:30px">20</div>
<div class="c" style="left:391px;top:628px;width:94px"><svg class="g"><use href="#g67"/></svg><svg class="g"><use href="#g68"/></svg><svg class="g"><use href="#g69"/></svg><svg class="g"><use href="#g70"/></svg><svg class="g"><use href="#g5"/></svg><svg class="g"><use href="#g6"/></svg><svg class="g"><use href="#g43"/></svg></div>
<div class="c" style="left:486px;top:628px;width:80px"><b class="u">WJR</b>230218001</div>
<div class="c" style="left:567px;top:628px;width:70px">2023-02-18</div>
<div class="c" style="left:638px;top:628px;width:194px"><svg class="g"><use href="#g30"/></svg><svg class="g"><use href="#g115"/></svg><svg class="g"><use href="#g30"/></svg><svg class="g"><use href="#g135"/></svg><svg class="g"><use href="#g108"/></svg><svg class="g"><use href="#g136"/></svg><svg class="g"><use href="#g108"/></svg><svg class="g"><use href="#g137"/></svg><svg class="g"><use href="#g98"/></svg><svg class="g"><use href="#g99"/></svg><svg class="g"><use href="#g102"/></svg><svg class="g"><use href="#g103"/></svg></div>
<div class="c" style="left:833px;top:628px;width:50px">admin</div>
<div class="c" style="left:884px;top:628px;width:70px"><b class="u">A</b>200001</div>
<div class="c" style="left:955px;top:628px;width:127px"><svg class="g"><use href="#g130"/></svg><svg class="g"><use href="#g7"/></svg><svg class="g"><use href="#g131"/></svg><svg class="g"><use href="#g132"/></svg><svg class="g"><use href="#g133"/></svg></div>
<div class="c" style="left:1083px;top:628px;width:164px"><b class="u">HYKGD</b>2-<b class="u">A</b></div>
<div class="c" style="left:1248px;top:628px;width:130px"><svg class="g"><use href="#g134"/></svg></div>
<div class="c" style="left:1379px;top:628px;width:130px"><svg class="g"><use href="#g71"/></svg><svg class="g"><use href="#g54"/></svg><svg class="g"><use href="#g14"/></svg></div>
<div class="c" style="left:1510px;top:628px;width:60px">1</div>
<div class="c" style="left:360px;top:652px;width:30px">21</div>
<div class="c" style="left:391px;top:652px;width:94px"><svg class="g"><use href="#g6"/></svg><svg class="g"><use href="#g62"/></svg><svg class="g"><use href="#g55"/></svg><svg class="g"><use href="#g66"/></svg><svg class="g"><use href="#g43"/></svg></div>
<div class="c" style="left:486px;top:652px;width:80px"><b class="u">KTZ</b>230213001</div>
<div class="c" style="left:567px;top:652px;width:70px">2023-02-13</div>
<div class="c" style="left:638px;top:652px;width:194px"><svg class="g"><use href="#g30"/></svg><svg class="g"><use href="#g115"/></svg><svg class="g"><use href="#g116"/></svg><svg class="g"><use href="#g115"/></svg><svg class="g"><use href="#g108"/></svg><svg class="g"><use href="#g117"/></svg><svg class="g"><use href="#g118"/></svg><svg class="g"><use href="#g119"/></svg><svg class="g"><use href="#g98"/></svg><svg class="g"><use href="#g99"/></svg><svg class="g"><use href="#g102"/></svg><svg class="g"><use href="#g103"/></svg></div>
<div class="c" style="left:833px;top:652px;width:50px">admin</div>
<div class="c" style="left:884px;top:652px;width:70px"><b class="u">C</b>0222006</div>
<div class="c" style="left:955px;top:652px;width:127px"><b class="u">UPS</b><svg class="g"><use href="#g105"/></svg><svg class="g"><use href="#g106"/></svg><svg class="g"><use href="#g107"/></svg><svg class="g"><use href="#g108"/></svg><svg class="g"><use href="#g109"/></svg></div>
<div class="c" style="left:1083px;top:652px;width:164px">10<b class="u">KVA</b> 3/1 30min<svg class="g"><use href="#g110"/></svg><svg class="g"><use href="#g111"/></svg><svg class="g"><use href="#g112"/></svg> <b class="u">HR</b>3500<svg class="g"><use href="#g113"/></svg></div>
<div class="c" style="left:1248px;top:652px;width:130px"><svg class="g"><use href="#g114"/></svg></div>
<div class="c" style="left:1379px;top:652px;width:130px"><svg class="g"><use href="#g71"/></svg><svg class="g"><use href="#g54"/></svg><svg class="g"><use href="#g14"/></svg></div>
<div class="c" style="left:1510px;top:652px;width:60px">10</div>
<div class="c" style="left:360px;top:676px;width:30px">22</div>
<div class="c" style="left:391px;top:676px;width:94px"><svg class="g"><use href="#g50"/></svg><svg class="g"><use href="#g51"/></svg><svg class="g"><use href="#g76"/></svg><svg class="g"><use href="#g53"/></svg><svg class="g"><use href="#g43"/></svg></div>
<div class="c" style="left:486px;top:676px;width:80px"><b class="u">CPC</b>230213001</div>
<div class="c" style="left:567px;top:676px;width:70px">2023-02-13</div>
<div class="c" style="left:638px;top:676px;width:194px"><svg class="g"><use href="#g91"/></svg><svg class="g"><use href="#g92"/></svg><svg class="g"><use href="#g93"/></svg><svg class="g"><use href="#g94"/></svg><svg class="g"><use href="#g95"/></svg><svg class="g"><use href="#g96"/></svg><svg class="g"><use href="#g97"/></svg><svg class="g"><use href="#g96"/></svg><svg class="g"><use href="#g98"/></svg><svg class="g"><use href="#g99"/></svg><svg class="g"><use href="#g100"/></svg><svg class="g"><use href="#g101"/></svg><svg class="g"><use href="#g102"/></svg><svg class="g"><use href="#g103"/></svg></div>
<div class="c" style="left:833px;top:676px;width:50px">admin</div>
<div class="c" style="left:884px;top:676px;width:70px"><b class="u">C</b>0222006</div>
<div class="c" style="left:955px;top:676px;width:127px"><b class="u">UPS</b><svg class="g"><use href="#g105"/></svg><svg class="g"><use href="#g106"/></svg><svg class="g"><use href="#g107"/></svg><svg class="g"><use href="#g108"/></svg><svg class="g"><use href="#g109"/></svg></div>
<div class="c" style="left:1083px;top:676px;width:164px">10<b class="u">KVA</b> 3/1 30min<svg class="g"><use href="#g110"/></svg><svg class="g"><use href="#g111"/></svg><svg class="g"><use href="#g112"/></svg> <b class="u">HR</b>3500<svg class="g"><use href="#g113"/></svg></div>
<div class="c" style="left:1248px;top:676px;width:130px"><svg class="g"><use href="#g114"/></svg></div>
<div class="c" style="left:1379px;top:676px;width:130px"><svg class="g"><use href="#g71"/></svg><svg class="g"><use href="#g54"/></svg><svg class="g"><use href="#g14"/></svg></div>
<div class="c" style="left:1571px;top:676px;width:60px">1</div>
<div class="c" style="left:360px;top:700px;width:30px">23</div>
<div class="c" style="left:391px;top:700px;width:94px"><svg class="g"><use href="#g60"/></svg><svg class="g"><use href="#g61"/></svg><svg class="g"><use href="#g5"/></svg><svg class="g"><use href="#g6"/></svg><svg class="g"><use href="#g43"/></svg></div>
<div class="c" style="left:486px;top:700px;width:80px"><b class="u">CGR</b>230207001</div>
<div class="c" style="left:567px;top:700px;width:70px">2023-02-07</div>
<div class="c" style="left:638px;top:700px;width:194px"><svg class="g"><use href="#g142"/></svg><svg class="g"><use href="#g143"/></svg><svg class="g"><use href="#g144"/></svg><svg class="g"><use href="#g145"/></svg><svg class="g"><use href="#g146"/></svg><svg class="g"><use href="#g147"/></svg><svg class="g"><use href="#g138"/></svg><svg class="g"><use href="#g148"/></svg><svg class="g"><use href="#g149"/></svg><svg class="g"><use href="#g76"/></svg><svg class="g"><use href="#g98"/></svg><svg class="g"><use href="#g99"/></svg><svg class="g"><use href="#g102"/></svg><svg class="g"><use href="#g103"/></svg></div>
<div class="c" style="left:833px;top:700px;width:50px"><svg class="g"><use href="#g150"/></svg><svg class="g"><use href="#g151"/></svg><svg class="g"><use href="#g152"/></svg></div>
<div class="c" style="left:884px;top:700px;width:70px"><b class="u">DF</b>01042002</div>
<div class="c" style="left:955px;top:700px;width:127px"><svg class="g"><use href="#g66"/></svg><svg class="g"><use href="#g153"/></svg><svg class="g"><use href="#g154"/></svg><svg class="g"><use href="#g134"/></svg></div>
<div class="c" style="left:1083px;top:700px;width:164px">220<b class="u">V</b>/10<b class="u">A</b></div>
<div class="c" style="left:1248px;top:700px;width:130px"><svg class="g"><use href="#g126"/></svg></div>
<div class="c" style="left:1379px;top:700px;width:130px"><svg class="g"><use href="#g127"/></svg><svg class="g"><use href="#g128"/></svg><svg class="g"><use href="#g74"/></svg><svg class="g"><use href="#g75"/></svg><svg class="g"><use href="#g21"/></svg><svg class="g"><use href="#g14"/></svg></div>
<div class="c" style="left:1510px;top:700px;width:60px">23</div>
<div class="c" style="left:360px;top:724px;width:30px">24</div>
<div class="c" style="left:391px;top:724px;width:94px"><svg class="g"><use href="#g60"/></svg><svg class="g"><use href="#g61"/></svg><svg class="g"><use href="#g5"/></svg><svg class="g"><use href="#g6"/></svg><svg class="g"><use href="#g43"/></svg></div>
<div class="c" style="left:486px;top:724px;width:80px"><b class="u">CGR</b>230207002</div>
<div class="c" style="left:567px;top:724px;width:70px">2023-02-07</div>
<div class="c" style="left:638px;top:724px;width:194px"><svg class="g"><use href="#g30"/></svg><svg class="g"><use href="#g115"/></svg><svg class="g"><use href="#g155"/></svg><svg class="g"><use href="#g156"/></svg><svg class="g"><use href="#g157"/></svg><svg class="g"><use href="#g108"/></svg><svg class="g"><use href="#g158"/></svg><svg class="g"><use href="#g24"/></svg><svg class="g"><use href="#g98"/></svg><svg class="g"><use href="#g99"/></svg><svg class="g"><use href="#g102"/></svg><svg class="g"><use href="#g103"/></svg></div>
<div class="c" style="left:833px;top:724px;width:50px"><svg class="g"><use href="#g150"/></svg><svg class="g"><use href="#g151"/></svg><svg class="g"><use href="#g152"/></svg></div>
<div class="c" style="left:884px;top:724px;width:70px"><b class="u">DA</b>08010001</div>
<div class="c" style="left:955px;top:724px;width:127px"><svg class="g"><use href="#g159"/></svg><svg class="g"><use href="#g107"/></svg><svg class="g"><use href="#g160"/></svg><svg class="g"><use href="#g161"/></svg><svg class="g"><use href="#g162"/></svg></div>
<div class="c" style="left:1248px;top:724px;width:130px"><svg class="g"><use href="#g126"/></svg></div>
<div class="c" style="left:1379px;top:724px;width:130px"><svg class="g"><use href="#g127"/></svg><svg class="g"><use href="#g128"/></svg><svg class="g"><use href="#g74"/></svg><svg class="g"><use href="#g75"/></svg><svg class="g"><use href="#g21"/></svg><svg class="g"><use href="#g14"/></svg></div>
<div class="c" style="left:1510px;top:724px;width:60px">18</div>
<div class="c" style="left:360px;top:748px;width:30px">25</div>
<div class="c" style="left:391px;top:748px;width:94px"><svg class="g"><use href="#g60"/></svg><svg class="g"><use href="#g61"/></svg><svg class="g"><use href="#g5"/></svg><svg class="g"><use href="#g6"/></svg><svg class="g"><use href="#g43"/></svg></div>
<div class="c" style="left:486px;top:748px;width:80px"><b class="u">CGR</b>230207003</div>
<div class="c" style="left:567px;top:748px;width:70px">2023-02-07</div>
<div class="c" style="left:638px;top:748px;width:194px"><svg class="g"><use href="#g30"/></svg><svg class="g"><use href="#g115"/></svg><svg class="g"><use href="#g155"/></svg><svg class="g"><use href="#g156"/></svg><svg class="g"><use href="#g157"/></svg><svg class="g"><use href="#g108"/></svg><svg class="g"><use href="#g158"/></svg><svg class="g"><use href="#g24"/></svg><svg class="g"><use href="#g98"/></svg><svg class="g"><use href="#g99"/></svg><svg class="g"><use href="#g102"/></svg><svg class="g"><use href="#g103"/></svg></div>
<div class="c" style="left:833px;top:748px;width:50px"><svg class="g"><use href="#g150"/></svg><svg class="g"><use href="#g151"/></svg><svg class="g"><use href="#g152"/></svg></div>
<div class="c" style="left:884px;top:748px;width:70px"><b class="u">DA</b>08010001</div>
<div class="c" style="left:955px;top:748px;width:127px"><svg class="g"><use href="#g159"/></svg><svg class="g"><use href="#g107"/></svg><svg class="g"><use href="#g160"/></svg><svg class="g"><use href="#g161"/></svg><svg class="g"><use href="#g162"/></svg></div>
<div class="c" style="left:1248px;top:748px;width:130px"><svg class="g"><use href="#g126"/></svg></div>
<div class="c" style="left:1379px;top:748px;width:130px"><svg class="g"><use href="#g127"/></svg><svg class="g"><use href="#g128"/></svg><svg class="g"><use href="#g74"/></svg><svg class="g"><use href="#g75"/></svg><svg class="g"><use href="#g21"/></svg><svg class="g"><use href="#g14"/></svg></div>
<div class="c" style="left:1510px;top:748px;width:60px">18</div>
<div class="c" style="left:360px;top:772px;width:30px">26</div>
<div class="c" style="left:391px;top:772px;width:94px"><svg class="g"><use href="#g60"/></svg><svg class="g"><use href="#g61"/></svg><svg class="g"><use href="#g5"/></svg><svg class="g"><use href="#g6"/></svg><svg class="g"><use href="#g43"/></svg></div>
<div class="c" style="left:486px;top:772px;width:80px"><b class="u">CGR</b>230207004</div>
<div class="c" style="left:567px;top:772px;width:70px">2023-02-07</div>
<div class="c" style="left:638px;top:772px;width:194px"><svg class="g"><use href="#g30"/></svg><svg class="g"><use href="#g115"/></svg><svg class="g"><use href="#g155"/></svg><svg class="g"><use href="#g156"/></svg><svg class="g"><use href="#g157"/></svg><svg class="g"><use href="#g108"/></svg><svg class="g"><use href="#g158"/></svg><svg class="g"><use href="#g24"/></svg><svg class="g"><use href="#g98"/></svg><svg class="g"><use href="#g99"/></svg><svg class="g"><use href="#g102"/></svg><svg class="g"><use href="#g103"/></svg></div>
<div class="c" style="left:833px;top:772px;width:50px"><svg class="g"><use href="#g150"/></svg><svg class="g"><use href="#g151"/></svg><svg class="g"><use href="#g152"/></svg></div>
<div class="c" style="left:884px;top:772px;width:70px"><b class="u">DA</b>08010001</div>
<div class="c" style="left:955px;top:772px;width:127px"><svg class="g"><use href="#g159"/></svg><svg class="g"><use href="#g107"/></svg><svg class="g"><use href="#g160"/></svg><svg class="g"><use href="#g161"/></svg><svg class="g"><use href="#g162"/></svg></div>
<div class="c" style="left:1248px;top:772px;width:130px"><svg class="g"><use href="#g126"/></svg></div>
<div class="c" style="left:1379px;top:772px;width:130px"><svg class="g"><use href="#g127"/></svg><svg class="g"><use href="#g128"/></svg><svg class="g"><use href="#g74"/></svg><svg class="g"><use href="#g75"/></svg><svg class="g"><use href="#g21"/></svg><svg class="g"><use href="#g14"/></svg></div>
<div class="c" style="left:1510px;top:772px;width:60px">18</div>
<div class="c" style="left:360px;top:796px;width:30px">27</div>
<div class="c" style="left:391px;top:796px;width:94px"><svg class="g"><use href="#g60"/></svg><svg class="g"><use href="#g61"/></svg><svg class="g"><use href="#g5"/></svg><svg class="g"><use href="#g6"/></svg><svg class="g"><use href="#g43"/></svg></div>
<div class="c" style="left:486px;top:796px;width:80px"><b class="u">CGR</b>230207005</div>
<div class="c" style="left:567px;top:796px;width:70px">2023-02-07</div>
<div class="c" style="left:638px;top:796px;width:194px"><svg class="g"><use href="#g30"/></svg><svg class="g"><use href="#g115"/></svg><svg class="g"><use href="#g155"/></svg><svg class="g"><use href="#g156"/></svg><svg class="g"><use href="#g157"/></svg><svg class="g"><use href="#g108"/></svg><svg class="g"><use href="#g158"/></svg><svg class="g"><use href="#g24"/></svg><svg class="g"><use href="#g98"/></svg><svg class="g"><use href="#g99"/></svg><svg class="g"><use href="#g102"/></svg><svg class="g"><use href="#g103"/></svg></div>
<div class="c" style="left:833px;top:796px;width:50px"><svg class="g"><use href="#g150"/></svg><svg class="g"><use href="#g151"/></svg><svg class="g"><use href="#g152"/></svg></div>
<div class="c" style="left:884px;top:796px;width:70px"><b class="u">DA</b>08010001</div>
<div class="c" style="left:955px;top:796px;width:127px"><svg class="g"><use href="#g159"/></svg><svg class="g"><use href="#g107"/></svg><svg class="g"><use href="#g160"/></svg><svg class="g"><use href="#g161"/></svg><svg class="g"><use href="#g162"/></svg></div>
<div class="c" style="left:1248px;top:796px;width:130px"><svg class="g"><use href="#g126"/></svg></div>
<div class="c" style="left:1379px;top:796px;width:130px"><svg class="g"><use href="#g127"/></svg><svg class="g"><use href="#g128"/></svg><svg class="g"><use href="#g74"/></svg><svg class="g"><use href="#g75"/></svg><svg class="g"><use href="#g21"/></svg><svg class="g"><use href="#g14"/></svg></div>
<div class="c" style="left:1510px;top:796px;width:60px">18</div>
<div class="c" style="left:360px;top:820px;width:30px">28</div>
<div class="c" style="left:391px;top:820px;width:94px"><svg class="g"><use href="#g60"/></svg><svg class="g"><use href="#g61"/></svg><svg class="g"><use href="#g5"/></svg><svg class="g"><use href="#g6"/></svg><svg class="g"><use href="#g43"/></svg></div>
<div class="c" style="left:486px;top:820px;width:80px"><b class="u">CGR</b>230207006</div>
<div class="c" style="left:567px;top:820px;width:70px">2023-02-07</div>
<div class="c" style="left:638px;top:820px;width:194px"><svg class="g"><use href="#g30"/></svg><svg class="g"><use href="#g115"/></svg><svg class="g"><use href="#g155"/></svg><svg class="g"><use href="#g156"/></svg><svg class="g"><use href="#g157"/></svg><svg class="g"><use href="#g108"/></svg><svg class="g"><use href="#g158"/></svg><svg class="g"><use href="#g24"/></svg><svg class="g"><use href="#g98"/></svg><svg class="g"><use href="#g99"/></svg><svg class="g"><use href="#g102"/></svg><svg class="g"><use href="#g103"/></svg></div>
<div class="c" style="left:833px;top:820px;width:50px"><svg class="g"><use href="#g150"/></svg><svg class="g"><use href="#g151"/></svg><svg class="g"><use href="#g152"/></svg></div>
<div class="c" style="left:884px;top:820px;width:70px"><b class="u">DA</b>08010001</div>
<div class="c" style="left:955px;top:820px;width:127px"><svg class="g"><use href="#g159"/></svg><svg class="g"><use href="#g107"/></svg><svg class="g"><use href="#g160"/></svg><svg class="g"><use href="#g161"/></svg><svg class="g"><use href="#g162"/></svg></div>
<div class="c" style="left:1248px;top:820px;width:130px"><svg class="g"><use href="#g126"/></svg></div>
<div class="c" style="left:1379px;top:820px;width:130px"><svg class="g"><use href="#g127"/></svg><svg class="g"><use href="#g128"/></svg><svg class="g"><use href="#g74"/></svg><svg class="g"><use href="#g75"/></svg><svg class="g"><use href="#g21"/></svg><svg class="g"><use href="#g14"/></svg></div>
<div class="c" style="left:1510px;top:820px;width:60px">100</div>
</body></html>
